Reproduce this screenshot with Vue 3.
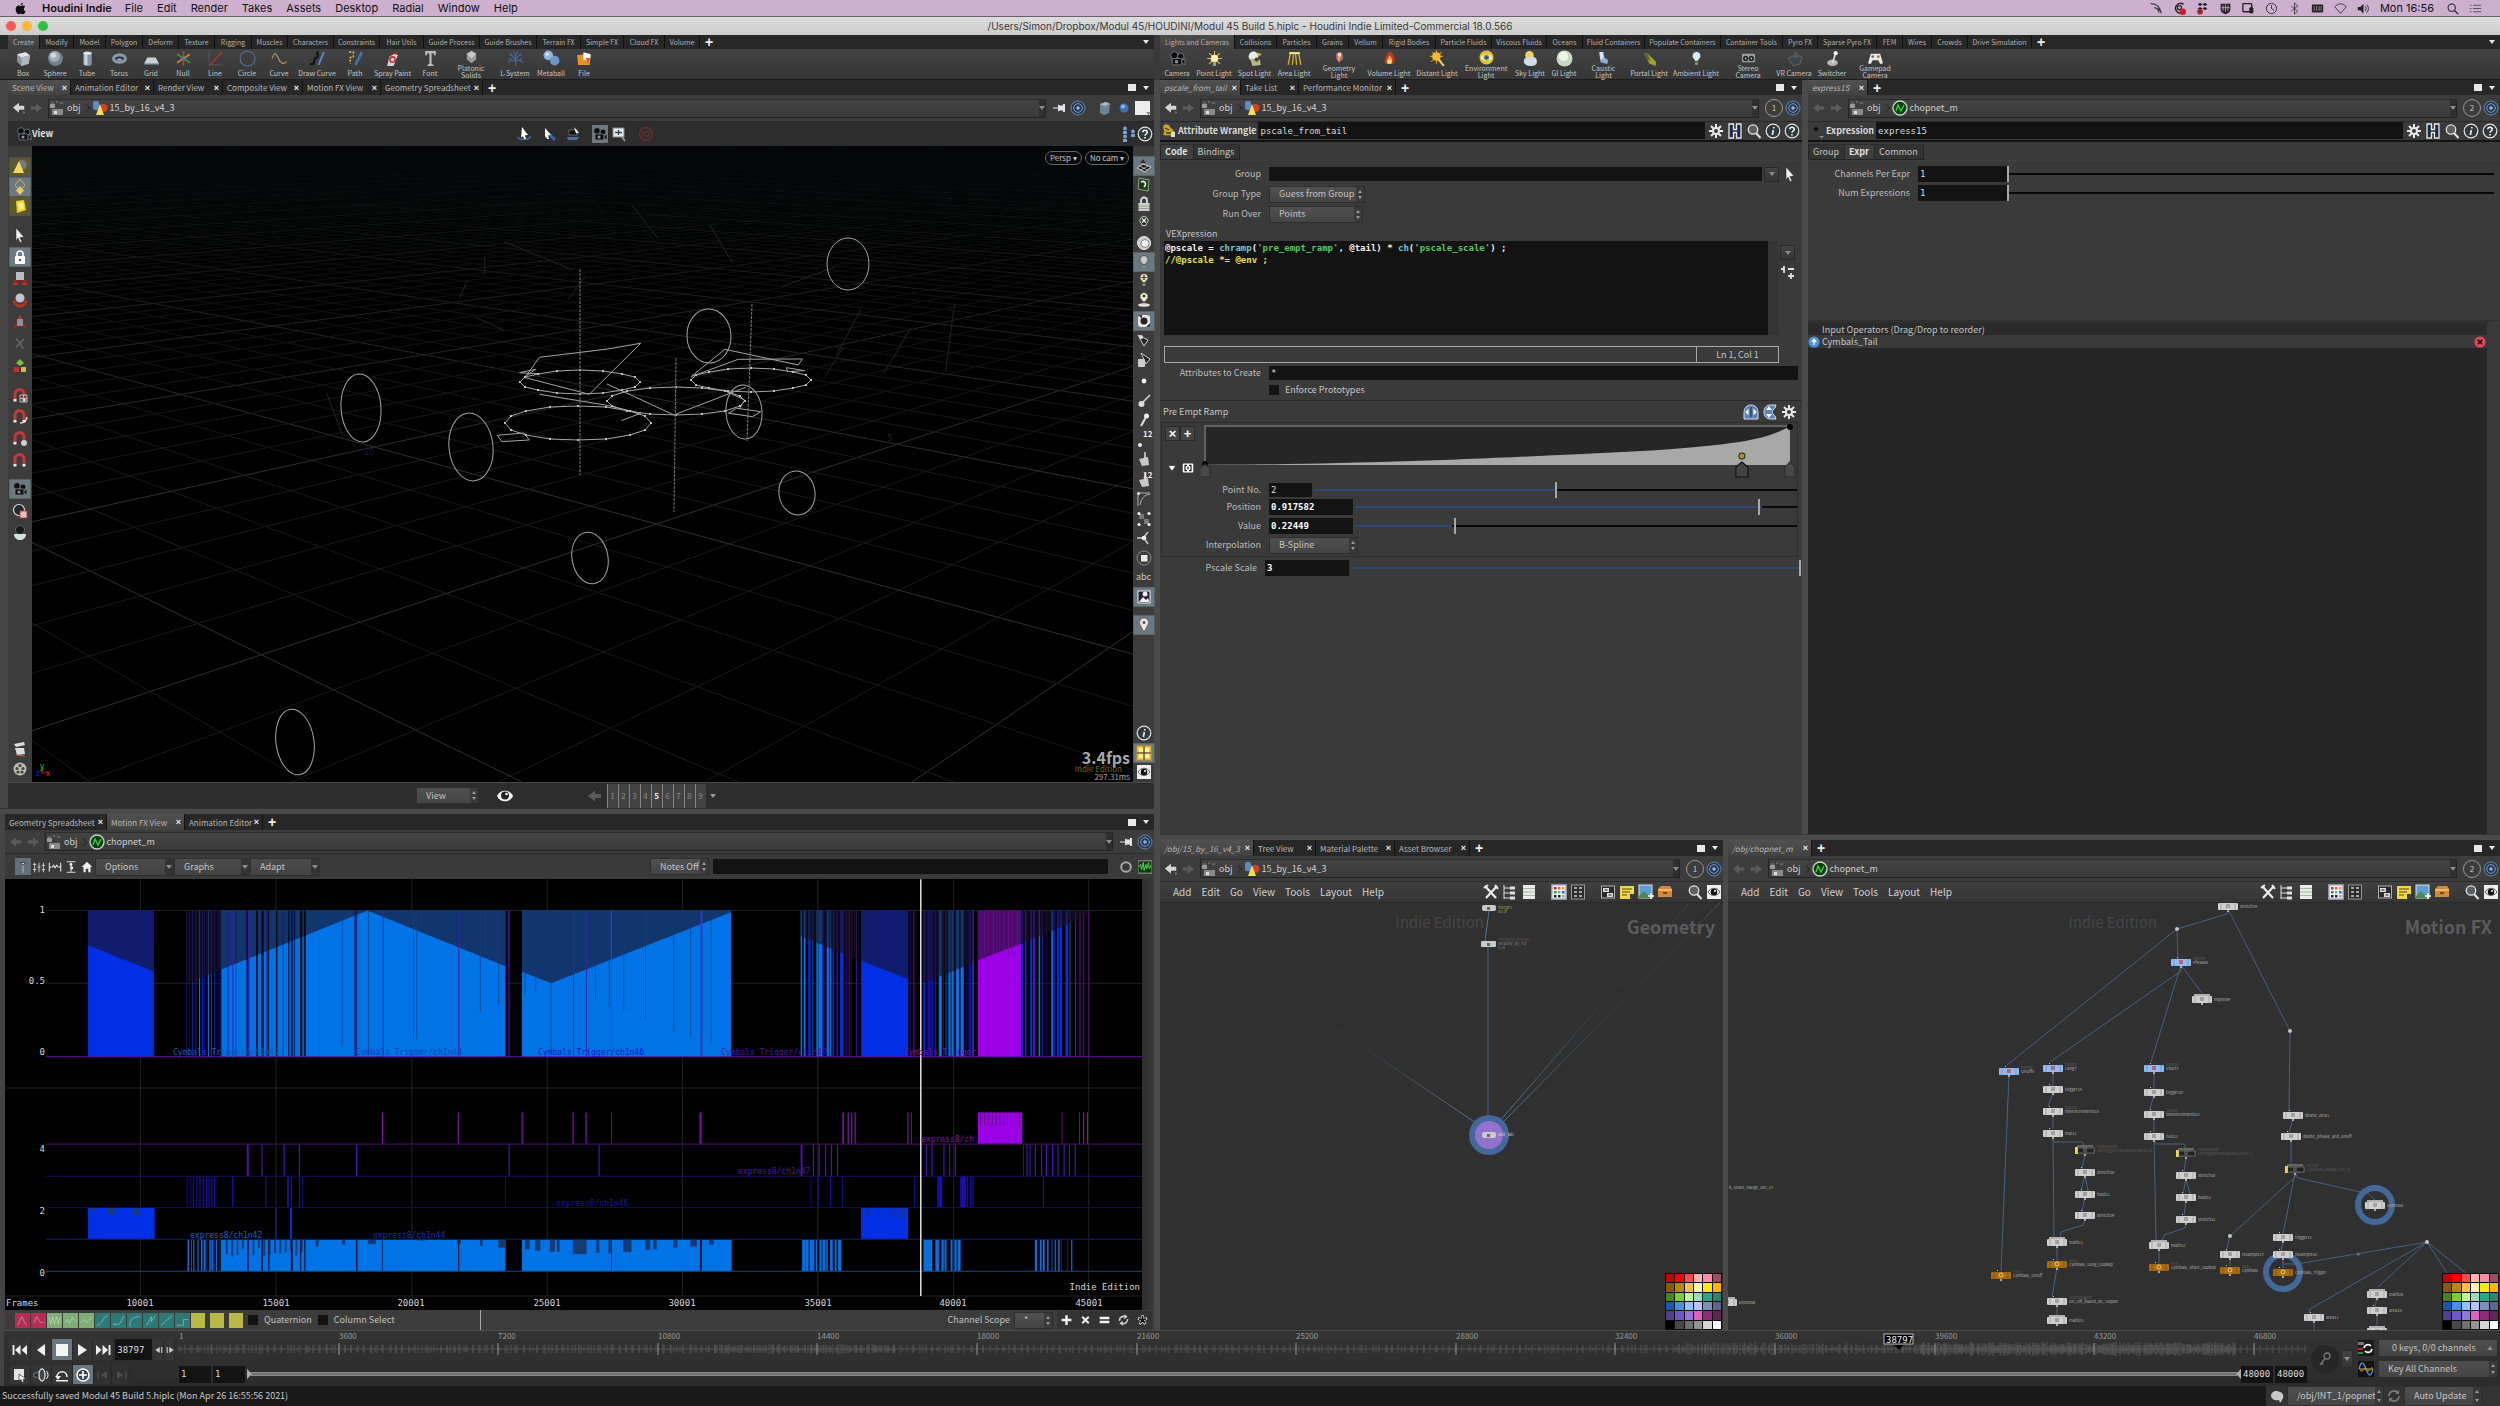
<script setup>
import { h } from 'vue'

const cam = '<g fill="#0d0f12" stroke="#7b8288" stroke-width=".8"><circle cx="5" cy="5" r="3.4"/><circle cx="11" cy="6" r="3"/><rect x="3" y="8" width="9" height="6" rx="1"/><path d="M12 10l3-2v6l-3-2z"/></g><circle cx="7" cy="11" r="1.6" fill="#8a9298"/>'
const magnet = '<path d="M3 12V7a4.500 4.500 0 0 1 9 0v5" fill="none" stroke="#c43a3a" stroke-width="3"/><path d="M1.500 12h3v2.500h-3zM10.500 12h3v2.500h-3z" fill="#e8e8e8"/>'
const bulb = (c) => `<path d="M8 1.500a4 4 0 0 0-2.400 7.200c.5.5.6 1 .6 1.800h3.600c0-.8.1-1.300.6-1.800A4 4 0 0 0 8 1.500z" fill="${c}" stroke="#222" stroke-width=".5"/><path d="M6.500 11.500h3v2.500h-3z" fill="#8a8f7a"/>`
const xyz = '<path d="M8 8L2 13M8 8l6 5" stroke="#a02020" stroke-width="3"/>'
const icons = {
  apple: '<path d="M11 1c0 1.600-1.300 3-2.800 3C8 2.500 9.500 1.200 11 1zM8.200 5c.8 0 1.700-.9 3-.8 1 .1 2 .5 2.600 1.500-2.400 1.500-2 4.700.5 5.700-.6 1.700-1.900 3.600-3.200 3.600-1 0-1.400-.6-2.700-.6s-1.700.6-2.700.6C3.900 15 2 11.700 2 9c0-3 1.900-4.700 3.800-4.700C7 4.300 7.600 5 8.200 5z" fill="#111"/>',
  box: '<path d="M2 4l8-2 4 3-1 8-7 2-4-4z" fill="#8a949e"/><path d="M2 4l8-2 4 3-8 2z" fill="#dfe5ea"/><path d="M6 7l8-2-1 8-7 2z" fill="#b0b9c2"/>',
  sphere: '<circle cx="8" cy="8" r="7" fill="#76808a"/><circle cx="7" cy="6" r="5" fill="#a3acb5"/><circle cx="6" cy="5" r="2.500" fill="#d2d8dd"/>',
  tube: '<rect x="4" y="2" width="8" height="13" rx="3" fill="#8793a0"/><rect x="5" y="3" width="3" height="11" fill="#c6d0d8"/><ellipse cx="8" cy="3" rx="4" ry="1.600" fill="#dbe2e8"/>',
  torus: '<ellipse cx="8" cy="8" rx="7" ry="5" fill="#8a98a8"/><ellipse cx="8" cy="8" rx="4" ry="2" fill="#2a3038"/><ellipse cx="8" cy="9" rx="2.500" ry="1" fill="#9fb0c4"/>',
  grid: '<path d="M4 7h8l3 6H1z" fill="#c9cfd4"/><path d="M1 13h14v1H1z" fill="#6d757c"/>',
  null: '<path d="M8 1v14" stroke="#c83c30" stroke-width="1.500"/><path d="M2 4l12 8" stroke="#3a9a3a" stroke-width="1.500"/><path d="M2 12l12-8" stroke="#d08a2a" stroke-width="1.500"/><circle cx="8" cy="8" r="1.600" fill="#4a80c0"/>',
  line: '<path d="M2 14V2M2 14h11" stroke="#555" /><path d="M3 14L14 2" stroke="#b83a3a" stroke-width="1.300"/>',
  circle: '<circle cx="8" cy="8" r="7" fill="none" stroke="#5672a0"/>',
  curve: '<path d="M1 8C3 2 5 3 7 8s5 6 8 3" fill="none" stroke="#c49a50"/><path d="M1 8l3-6 4 9 6 1" fill="none" stroke="#777" stroke-width=".6"/>',
  draw: '<path d="M1 13c6 2 2-5 6-6s-2-4 2-5" fill="none" stroke="#111" stroke-width="2"/><path d="M9 14l5-12" stroke="#4a86c8" stroke-width="2"/>',
  path: '<path d="M2 2h4v5H3v6" fill="none" stroke="#d8b830" stroke-dasharray="2 1.500" stroke-width="1.500"/><path d="M8 14l6-12" stroke="#3f74b4" stroke-width="2.500"/>',
  spray: '<path d="M5 6l6-3 2 2-4 10H3z" fill="#d8d4d0"/><circle cx="8" cy="9" r="2.500" fill="none" stroke="#c03030" stroke-width="1.500"/><path d="M9 1l4 1-2 3z" fill="#b0281e"/>',
  font: '<path d="M3 1h10v4h-1.500L11 3H9v10l2 1v1H5v-1l2-1V3H5l-.5 2H3z" fill="#b9bec2"/>',
  solids: '<path d="M8 1l5 3v6l-5 4-5-4V4z" fill="#9a9a9a"/><path d="M8 1l5 3-5 5-5-5z" fill="#c9c9c9"/>',
  tree: '<path d="M8 15V5M8 9L3 3M8 9l5-6M8 11l6-3M8 11L2 8M8 5L6 1M8 5l2-4M5 5L2 5M11 5l3 0M4 9l-3 3M12 9l3 3" stroke="#3e6ea6" fill="none"/>',
  meta: '<circle cx="5" cy="5" r="4.500" fill="#92b8de"/><circle cx="11" cy="10" r="4.500" fill="#6c98c8"/><circle cx="4" cy="4" r="1.500" fill="#dcecfb"/>',
  file: '<path d="M1 5l6-1 1 2h5v8H2z" fill="#e8902a"/><path d="M7 2l7 2-1 7-6-2z" fill="#fff"/><path d="M9 7l5 1-3 5z" fill="#e05a20"/>',
  camera: cam,
  point: '<path d="M8 1v14M1 8h14M3 3l10 10M13 3L3 13" stroke="#e8c040"/><circle cx="8" cy="8" r="3.500" fill="#fff3b0"/><rect x="6.500" y="11" width="3" height="4" fill="#999"/>',
  spot: '<circle cx="7" cy="6" r="4.500" fill="#e9e9e4"/><path d="M4 8l9 1 1 5-8 1z" fill="#b9b48c"/><circle cx="10" cy="9" r="2" fill="#444"/><path d="M10 2l5 2-3 2z" fill="#d8b820"/>',
  area: '<path d="M3 2h10v2H3z" fill="#ffe680"/><path d="M4 4L2 14M7 4l-1 10M9 4l1 10M12 4l2 10" stroke="#d8b430" stroke-width="1.200"/>',
  geo: '<ellipse cx="8" cy="7" rx="4" ry="5" fill="#9a6a90"/><path d="M8 3c3 4 0 6 0 11-3-4-2-7 0-11z" fill="#f0a030"/><circle cx="8" cy="5" r="2" fill="#ffe0a0"/>',
  volume: '<path d="M8 1c5 4 6 7 4 12H4C2 8 5 6 8 1z" fill="#c0391e"/><path d="M8 5c3 3 3 5 2 8H6c-2-3 1-5 2-8z" fill="#ff9a30"/><circle cx="8" cy="11" r="2" fill="#ffe48a"/>',
  distant: '<path d="M7 0v13M1 6h12M3 2l9 9M12 2L2 11" stroke="#d89a20"/><circle cx="7" cy="6" r="4" fill="#f3bc2e"/><path d="M9 9l5 6" stroke="#e8c860" stroke-width="2"/>',
  env: '<circle cx="8" cy="8" r="7.500" fill="#e4c428"/><ellipse cx="8" cy="8" rx="6" ry="3.500" fill="#f5edc0"/><circle cx="8" cy="8" r="3" fill="#6a8aa0"/><circle cx="8" cy="8" r="1.200" fill="#222"/>',
  sky: '<circle cx="7" cy="5" r="4" fill="#f4d060"/><path d="M2 9a4 3 0 0 1 6-2 4 4 0 0 1 6 4c0 3-2 4-6 4s-7-2-6-6z" fill="#cddbe8"/>',
  gi: '<circle cx="8" cy="8" r="7.500" fill="#c9d6c4"/><circle cx="7" cy="6" r="4.500" fill="#eef4ea"/>',
  caustic: '<path d="M3 2h5l1 6 4 3-1 4-7-2z" fill="#8fb0d4"/><path d="M4 2h3l1 6-3 3z" fill="#d9e6f4"/>',
  portal: '<path d="M3 3l3 0 8 8 0 4-6-2z" fill="#a3a028"/><path d="M3 3l3 0 3 7-3-1z" fill="#5c6a20"/>',
  ambient: bulb('#d9eef4'),
  stereo: '<rect x="1" y="4" width="14" height="9" rx="1" fill="#9a9d9e"/><circle cx="5" cy="9" r="2.800" fill="#222"/><circle cx="11" cy="9" r="2.800" fill="#222"/><circle cx="5" cy="9" r="1" fill="#9bc"/><circle cx="11" cy="9" r="1" fill="#9bc"/>',
  vr: '<path d="M2 8l8-4 5 3-2 6-6 2z" fill="#3b4248" stroke="#70787e" stroke-width=".7"/><path d="M8 1l2 0 2 6-5 1z" fill="#50585e"/>',
  switcher: '<ellipse cx="8" cy="12" rx="5" ry="3" fill="#b8b8b8"/><path d="M8 12l3-9" stroke="#ddd" stroke-width="1.500"/><circle cx="11" cy="3" r="2" fill="#eee"/>',
  pad: '<path d="M3 4h10l3 10-3 1-2-4H5l-2 4-3-1z" fill="#ece9e2"/><circle cx="5" cy="7" r="1.300" fill="#555"/><circle cx="11" cy="7" r="1.300" fill="#c44"/>',
  back: '<path d="M1 7.500L8 2v3.500h6V10H8v3.500z" fill="#d4d4d4"/><path d="M13 11v4l2-2z" fill="#888"/>',
  backDim: '<path d="M1 8l7-5.500V6h6v4H8v3.500z" fill="#5a5a5a"/>',
  fwd: '<path d="M15 8L8 2.500V6H2v4h6v3.500z" fill="#5a5a5a"/>',
  obj: '<path d="M2 3h3M7 2h2M11 3h3M4 6h2" stroke="#888"/><rect x="1" y="4" width="5" height="4" fill="#9a9a9a"/><rect x="3" y="9" width="11" height="6" fill="#8a8a8a"/><rect x="5" y="11" width="3" height="3" fill="#ddd"/>',
  geoObj: '<rect x="1" y="1" width="6" height="9" rx="2" fill="#5c8cc8"/><circle cx="11.500" cy="8" r="4" fill="#d0421e"/><path d="M8 4l4 11H4z" fill="#f7dc5a"/>',
  chop: '<circle cx="8" cy="8" r="7" fill="#123d12" stroke="#bfd8bf" stroke-width="1.400"/><path d="M4 11l2-6 3 6 3-6" fill="none" stroke="#38d838" stroke-width="1.300"/>',
  pin: '<path d="M1 7.500h5v-3l2 1h3V4h2v8h-2v-1.500H8l-2 1v-3H1z" fill="#e2e2e2"/>',
  target: '<circle cx="8" cy="8" r="7" fill="#26384f" stroke="#6787b2"/><circle cx="8" cy="8" r="4.300" fill="none" stroke="#7f9fcb"/><circle cx="8" cy="8" r="1.800" fill="#8fb4e8"/>',
  gear: '<path d="M8 1v14M1 8h14M3 3l10 10M13 3L3 13" stroke="#e8e8e8" stroke-width="2"/><circle cx="8" cy="8" r="4" fill="#e8e8e8"/><circle cx="8" cy="8" r="2" fill="#3a3a3a"/>',
  hou: '<path d="M2 1h4.500v5.500h3V1H14v14H9.500V9.500h-3V15H2z" fill="#1c2c48" stroke="#e8e8e8" stroke-width="1.300"/>',
  mag: '<circle cx="7" cy="6.500" r="4.700" fill="#5a5f63" stroke="#e4e4e4" stroke-width="1.300"/><path d="M10 10l4.500 5" stroke="#e4e4e4" stroke-width="2"/>',
  info: '<circle cx="8" cy="8" r="6.800" fill="#30383c" stroke="#e4e4e4" stroke-width="1.200"/><path d="M8.800 4v1.500M8.300 7l-.9 5" stroke="#e8e8e8" stroke-width="1.700"/>',
  help: '<circle cx="8" cy="8" r="6.800" fill="#30383c" stroke="#e4e4e4" stroke-width="1.200"/><path d="M5.800 6.200C6 3.500 10.500 3.700 10.300 6.300 10.200 8 8 8 8 9.700M8 11v1.500" fill="none" stroke="#fff" stroke-width="1.500"/>',
  wrangle: '<path d="M2 4c1-4 6-3 7 0l5 5-3 4c-3-2-7 1-9-2 2-2 1-4 0-7z" fill="#c8a820"/><path d="M4 5l4 2M5 10l5 0" stroke="#4a3a00" stroke-width="1.300"/><rect x="10" y="9" width="4" height="5" fill="#ddd"/>',
  expr: '<path d="M5 6h4M7 4v4" stroke="#000" stroke-width="1.600"/><path d="M10 13h5l-2.500 2.500z" fill="#888"/>',
  cone: '<circle cx="10" cy="6" r="5" fill="#777"/><path d="M7 2l5 12H1z" fill="#f3d860"/>',
  diamonds: '<path d="M8 0l5 6-5 6-5-6z" fill="none" stroke="#d0b050"/><path d="M8 7l4 4.500L8 16l-4-4.500z" fill="#e8c860"/>',
  cubeY: '<path d="M4 3l8-1 2 10-9 3z" fill="#f0d020"/><path d="M6 5l5-.5 1 6-5 1.500z" fill="#fbf08a"/>',
  cursor: '<path d="M4 1l8 9-4 .5L10 15l-2 .5L6 11l-2 3z" fill="#f2f2f2" stroke="#222" stroke-width=".5"/>',
  lock: '<rect x="3" y="7" width="10" height="8" rx="1" fill="#fff"/><path d="M5 7V5a3 3 0 0 1 6 0v2" fill="none" stroke="#fff" stroke-width="1.600"/><circle cx="8" cy="11" r="1.300" fill="#666"/>',
  move: xyz + '<rect x="4" y="2" width="8" height="8" fill="#b5bcc2"/><path d="M1 14h5M10 14h5" stroke="#c83030" stroke-width="2"/>',
  rot: '<path d="M2 8a6 6 0 1 0 12 0" fill="none" stroke="#b83220" stroke-width="3"/><circle cx="8" cy="6" r="4.500" fill="#bcc5cc"/>',
  scale: xyz + '<rect x="5" y="5" width="6" height="7" fill="#8a9096"/><path d="M8 0l2 5H6z" fill="#c82c2c"/>',
  pose: '<path d="M4 2l4 5 4-4M8 7l-4 4M8 7l3 6" stroke="#606060" stroke-width="1.800" fill="none"/>',
  handle: '<path d="M8 1l4 4-4 3-4-3z" fill="#80c030"/><path d="M2 9l5 0 0 5-5 0z" fill="#c83030"/><path d="M9 9l5 0 0 5-5 0z" fill="#c8c040"/>',
  snapGrid: magnet + '<path d="M8 8h7v7H8zM8 11.500h7M11.500 8v7" fill="none" stroke="#bbb"/>',
  snapCurve: magnet + '<path d="M8 15c5 0 6-2 7-6" stroke="#ddd" fill="none" stroke-width="1.500"/>',
  snapPt: magnet + '<circle cx="12" cy="13" r="3" fill="#ccc"/>',
  magnet,
  render: '<circle cx="7" cy="7" r="5.500" fill="#23282c" stroke="#ddd" stroke-width="1.200"/><path d="M8 8h7v7H8z" fill="#d8c8c0" stroke="#c83030"/>',
  orb: '<circle cx="8" cy="5" r="4.500" fill="#16181a" stroke="#777" stroke-width=".7"/><path d="M2 9h12c0 8-12 8-12 0z" fill="#d3e0e0"/>',
  clap: '<path d="M2 3l10-2 1 3-9 2zM3 7h9l1 6-8 1z" fill="#ddd"/><path d="M4 14l9 1" stroke="#c86040"/>',
  reel: '<circle cx="8" cy="8" r="6.500" fill="#b8beb0"/><g fill="#444"><circle cx="8" cy="4.500" r="1.600"/><circle cx="11" cy="7.500" r="1.600"/><circle cx="10" cy="11" r="1.600"/><circle cx="6" cy="11" r="1.600"/><circle cx="5" cy="7.500" r="1.600"/></g>',
  mesh: '<path d="M1 10l6-4 8 3-6 5z" fill="#222" stroke="#eee" stroke-width=".8"/><path d="M4 8l7 4M5 12l7-4" stroke="#eee" stroke-width=".6"/><path d="M7 1l3 4H4z" fill="#333"/>',
  clip: '<path d="M3 2l10 2-1 11-10-2z" fill="#223a22" stroke="#7ab070"/><path d="M5 6c4-2 6 2 3 5" stroke="#eee" fill="none" stroke-width="1.500"/>',
  lockG: '<rect x="2.500" y="7" width="11" height="8" fill="#cdd0c4"/><path d="M5 7V4.500a3 3 0 0 1 6 0V7" fill="none" stroke="#ddd" stroke-width="1.800"/><path d="M3 10h10M3 12.500h10" stroke="#999"/>',
  bulbX: '<path d="M8 1.500a4 4 0 0 0-2.400 7.200l.6 1.800h3.600l.6-1.800A4 4 0 0 0 8 1.500z" fill="#222" stroke="#cfd8cf"/><path d="M6 3.500l4 4M10 3.500l-4 4" stroke="#e8e8e8" stroke-width="1.500"/>',
  disc: '<circle cx="8" cy="8" r="6.500" fill="#ccc" stroke="#eee"/><circle cx="9" cy="8.500" r="4" fill="#efefef" stroke="#888"/>',
  bulb: bulb('#c3ccc6'),
  bulbP: bulb('#e8e0b0') + '<path d="M5.500 5.500h5M8 3v5" stroke="#333" stroke-width="1.200"/>',
  bulbS: bulb('#f5f0d0') + '<ellipse cx="8" cy="14" rx="6" ry="1.800" fill="#ddd"/><circle cx="8" cy="5" r="1.500" fill="#333"/>',
  panda: '<rect x="2" y="2" width="12" height="12" rx="3" fill="#e4e4e4"/><circle cx="8" cy="8" r="3.500" fill="#222"/><path d="M2 2h4v4zM14 14h-4l4-4z" fill="#444"/>',
  ptr: '<path d="M2 3l10 5-4 6z" fill="#222" stroke="#ccc"/><circle cx="5" cy="5" r="2" fill="#ddd"/>',
  ptr2: '<path d="M5 1l9 6-4 5z" fill="#222" stroke="#ccc"/><rect x="2" y="7" width="7" height="8" rx="1" fill="#ccc"/>',
  dot: '<circle cx="8" cy="8" r="2.400" fill="#eee"/>',
  brush: '<path d="M14 2L7 9" stroke="#ddd" stroke-width="1.500"/><circle cx="5.500" cy="11" r="3" fill="#ddd"/>',
  needle: '<circle cx="10.500" cy="4" r="2.500" fill="#eee"/><path d="M10 5L5 14" stroke="#ddd" stroke-width="2"/>',
  ptNum: '<circle cx="4" cy="14" r="2" fill="#eee"/>',
  bucket: '<path d="M3 8l9-2 1 8-7 1z" fill="#c8c8c8"/><path d="M9 1l0 7" stroke="#ddd" stroke-width="1.500"/>',
  hull: '<path d="M2 15V2h12M4 14C5 8 8 4 14 3" fill="none" stroke="#b0b0b0"/><circle cx="2.500" cy="2.500" r="1.500" fill="#eee"/>',
  corners: '<path d="M3 3h5v5H3zM8 8h5v5H8z" fill="#777"/><g fill="#eee"><circle cx="3" cy="2.500" r="1.600"/><circle cx="13" cy="2.500" r="1.600"/><circle cx="3" cy="13.500" r="1.600"/><circle cx="13" cy="13.500" r="1.600"/></g>',
  fan: '<path d="M1 8h6l5-6M8 8l4 6" stroke="#ccc" stroke-width="1.500" fill="none"/><circle cx="8" cy="8" r="2.300" fill="#eee"/>',
  dbl: '<circle cx="8" cy="8" r="7" fill="none" stroke="#888"/><rect x="5" y="5" width="6.500" height="6.500" fill="#e8e8e8"/>',
  img: '<rect x="2" y="2" width="12" height="12" fill="#223" stroke="#eee"/><path d="M3 13l4-5 3 3 2-2 1.500 4z" fill="#eee"/><circle cx="9" cy="5" r="2.500" fill="#eee"/>',
  loc: '<path d="M8 1a4.500 4.500 0 0 1 4.300 6L8 15 3.700 7A4.500 4.500 0 0 1 8 1z" fill="#e8e8e8" stroke="#444" stroke-width=".6"/><circle cx="8" cy="5.500" r="1.500" fill="#555"/>',
  panes: '<rect x="1" y="1" width="14" height="14" fill="#f3c940" stroke="#d09a10"/><path d="M8 1v14M1 8h14" stroke="#333"/><path d="M3 3h4v4H3zM9 3h4v4H9zM3 9h4v4H3zM9 9h4v4H9z" fill="#fff0a0"/>',
  eye: '<rect x="1" y="1" width="14" height="14" fill="#eee"/><path d="M2 8c3-5 9-5 12 0-3 4.500-9 4.500-12 0z" fill="#fff" stroke="#333" stroke-width=".8"/><circle cx="8" cy="8" r="3.300" fill="#111"/><circle cx="9" cy="7" r="1" fill="#fff"/>',
  eyeBare: '<path d="M0 8c3-7 13-7 16 0-3 7-13 7-16 0z" fill="#f2f2f2"/><circle cx="8" cy="7.500" r="4" fill="#222"/><circle cx="9.500" cy="6" r="1.300" fill="#fff"/>',
  selA: '<path d="M2 11a6 3 0 1 0 12-1" fill="none" stroke="#4a6aa0" stroke-width="1.500"/><path d="M6 1l6 8-3 .3L10 13l-2 0-1-3-2 2z" fill="#fff"/>',
  selB: '<path d="M8 8l6 6" stroke="#3a66a8" stroke-width="3"/><path d="M4 2l6 7-3 .3L8 13l-2 0-1-3-1 2z" fill="#fff"/>',
  selC: '<path d="M1 11h12l-2 3H2z" fill="#4a6ea8"/><rect x="3" y="4" width="8" height="5" fill="#111" stroke="#888" stroke-width=".6"/><path d="M8 1l5 6-3 .3z" fill="#fff"/>',
  frame: '<rect x="2" y="2" width="11" height="9" fill="#e8e8e8" stroke="#888"/><path d="M7.500 4v5M4 6.500h7" stroke="#345" stroke-width="1.300"/><path d="M11 11l3 4" stroke="#999" stroke-width="1.500"/>',
  stop: '<circle cx="8" cy="8" r="6.500" fill="none" stroke="#6b2c2c" stroke-width="1.500"/><rect x="5" y="6" width="6" height="4" fill="none" stroke="#6b3434"/>',
  cube: '<path d="M3 4l6-2 4 2-1 9-5 2-4-2z" fill="#6d8494"/><path d="M3 4l6-2 4 2-6 2z" fill="#a8bac6"/>',
  ball: '<circle cx="8" cy="8" r="4.500" fill="#3b70b8"/><circle cx="7" cy="6.500" r="2" fill="#8ab8ee"/>',
  white: '<rect x="0" y="1" width="15" height="14" fill="#ececec"/><path d="M11 12h5l-2.500 3z" fill="#888"/>',
  people: '<g fill="#7aa0d8"><circle cx="4" cy="2.500" r="2"/><rect x="2" y="5" width="4" height="3"/><circle cx="12" cy="5.500" r="2"/><rect x="10" y="8" width="4" height="3"/><circle cx="4" cy="10.500" r="2"/><rect x="2" y="13" width="4" height="3"/></g>',
  cA: '<path d="M8 15V5M5 3h6L8 6z" stroke="#333" fill="#eee"/><path d="M8 6v9" stroke="#e4e4e4"/>',
  cB: '<path d="M3 3v11M8 3v11M13 3v11M1 5h4M6 8h4M11 6h4M1 11h4M11 11h4" stroke="#d8d8d8" fill="none"/>',
  cC: '<path d="M1.500 3v10M14.500 3v10M2 8h3l1.500-2L8 9l2-3 1.500 2H14" stroke="#e0e0e0" fill="none" stroke-width="1.300"/>',
  cD: '<path d="M3 2h10M3 14h10M8 3v10" stroke="#e0e0e0" stroke-width="1.300"/><circle cx="8" cy="5" r="1.600" fill="#eee"/><circle cx="9" cy="9" r="1.600" fill="#eee"/>',
  home: '<path d="M8 2l6 6h-2v6H9.500v-4h-3v4H4V8H2z" fill="#eee"/>',
  ring: '<circle cx="8" cy="8" r="5.500" fill="none" stroke="#a8a8a8" stroke-width="2.200"/>',
  wave: '<rect x="0" y="1" width="16" height="14" fill="#0e3a0e" stroke="#aaa"/><path d="M1 8l2-3 1 6 2-8 1 9 2-7 1 5 2-7 1 7 2-4" fill="none" stroke="#5ee05e"/>',
  tools: '<path d="M2 2l11 12M14 2L3 14" stroke="#ececec" stroke-width="2.200"/><path d="M1 4l4-3M12 1l3 4" stroke="#ececec" stroke-width="2"/>',
  treeI: '<path d="M2 1v14M2 4h6M2 9h6M2 14h6" stroke="#e0e0e0" fill="none"/><path d="M8 2.500h5v3H8zM8 7.500h5v3H8zM8 12.500h5v3H8z" fill="#e0e0e0"/>',
  sheet: '<rect x="2" y="1" width="12" height="14" fill="#e8ece6"/><path d="M2 4.500h12M2 8h12M2 11.500h12" stroke="#aab4aa"/>',
  palette: '<rect x="0" y="0" width="16" height="16" fill="#8d96a8"/><rect x="1.500" y="1.500" width="13" height="13" fill="#f4f4f4"/><path d="M3 3h2.500v2.500H3z" fill="#d02020"/><path d="M7 3h2.500v2.500H7z" fill="#e06060"/><path d="M11 3h2.500v2.500H11z" fill="#e8a030"/><path d="M3 7h2.500v2.500H3z" fill="#30a030"/><path d="M7 7h2.500v2.500H7z" fill="#60c0a0"/><path d="M11 7h2.500v2.500H11z" fill="#3060c0"/><path d="M3 11h2.500v2.500H3zM7 11h2.500v2.500H7z" fill="#222"/><path d="M11 11h2.500v2.500H11z" fill="#a0a0a0"/>',
  slots: '<rect x="1.500" y="1" width="13" height="14" fill="#2b2b2b" stroke="#9a9a9a"/><path d="M4 4h3M9 4h3M4 8h3M9 8h3M4 12h3M9 12h3" stroke="#d0d0d0" stroke-width="1.500"/>',
  flow: '<rect x="1.500" y="2" width="13" height="12" fill="#2b2b2b" stroke="#b0b0b0"/><path d="M3 4h6v4H3zM7 9h6v4H7z" fill="#dcdcdc"/><path d="M4.500 6h3M8.500 11h3" stroke="#222"/>',
  note: '<path d="M1 2h14v8l-4 5H1z" fill="#f0d848"/><path d="M3 5h10M3 8h8M3 11h5" stroke="#5a4a10"/><path d="M11 15v-5h4z" fill="#333"/>',
  pic: '<rect x="1" y="1" width="13" height="13" fill="#5b9fd8" stroke="#ddd"/><path d="M1 12l5-5 4 4 4-3v6H1z" fill="#4a8a50"/><path d="M10 12h6M13 9v6" stroke="#fff" stroke-width="1.500"/>',
  crate: '<path d="M1 5l3-3h9l2 3v8H1z" fill="#d38a34"/><path d="M1 5h14v2H1z" fill="#f0b468"/><path d="M6 8h4v2H6z" fill="#7a4410"/>',
  plusW: '<path d="M8 2v12M2 8h12" stroke="#f0f0f0" stroke-width="3"/>',
  xW: '<path d="M4 4l8 8M12 4l-8 8" stroke="#f0f0f0" stroke-width="2.500"/>',
  eqW: '<path d="M2 5.500h12M2 10.500h12" stroke="#f0f0f0" stroke-width="3"/>',
  refresh: '<path d="M3 9a5 5 0 0 1 7-5M13 7a5 5 0 0 1-7 5" fill="none" stroke="#cfcfcf" stroke-width="2"/><path d="M9 1l4 3-4 3zM7 9l-4 3 4 3z" fill="#cfcfcf"/>',
  refreshDim: '<path d="M3 8a5 5 0 0 1 9-3M13 8a5 5 0 0 1-9 3" fill="none" stroke="#7c7c7c" stroke-width="1.600"/><path d="M13 2v4H9zM3 14v-4h4z" fill="#7c7c7c"/>',
  star: '<path d="M8 2v6M8 8L2.500 6M8 8l5.500-2M8 8l-3.500 5M8 8l3.500 5" stroke="#ddd" stroke-width="3.500"/><path d="M8 3v5M8 8L3.500 6.500M8 8l4.500-1.500M8 8l-3 4M8 8l3 4" stroke="#111" stroke-width="2"/>',
  first: '<path d="M1.500 3v10" stroke="#f0f0f0" stroke-width="1.800"/><path d="M8.500 3v10L3 8zM15 3v10L9.500 8z" fill="#f0f0f0"/>',
  prev: '<path d="M12 2v12L4 8z" fill="#f0f0f0"/>',
  stopSq: '<rect x="2" y="2" width="12" height="12" fill="#f2f6f2"/>',
  play: '<path d="M4 2v12l9-6z" fill="#f0f0f0"/>',
  last: '<path d="M14.500 3v10" stroke="#f0f0f0" stroke-width="1.800"/><path d="M7.500 3v10L13 8zM1 3v10L6.500 8z" fill="#f0f0f0"/>',
  stepB: '<path d="M9 4v8L3 8zM11 4h1.500v8H11z" fill="#ccc"/>',
  stepF: '<path d="M7 4v8l6-4zM3.500 4H5v8H3.500z" fill="#ccc"/>',
  winPtr: '<rect x="2" y="2" width="10" height="11" fill="#e4e4e4"/><path d="M7 7l7 5-3 .5 1 3-2 0-1-3-2 1.500z" fill="#fff" stroke="#222" stroke-width=".7"/>',
  speaker: '<path d="M1 6h3l4-4v12l-4-4H1z" fill="#2a2a2a" stroke="#777"/><ellipse cx="9" cy="8" rx="3" ry="6" fill="#3a4650" stroke="#dcdcdc" stroke-width="1.300"/><path d="M13.500 4a6 6 0 0 1 0 8" stroke="#eee" fill="none"/>',
  loop: '<path d="M3 10c0-7 10-7 10 0" fill="none" stroke="#eee" stroke-width="1.600"/><path d="M1 9h6l-3 4zM2 13h12v1.500H2z" fill="#eee"/>',
  clock: '<circle cx="8" cy="8" r="6" fill="#3c4650" stroke="#fff" stroke-width="1.500"/><path d="M8 4v8M4 8h8" stroke="#fff" stroke-width="1.600"/>',
  kPrev: '<path d="M3 4v8" stroke="#4a4e44" stroke-width="1.500"/><path d="M12 4v8L6 8z" fill="#4a4e44"/>',
  kNext: '<path d="M13 4v8" stroke="#4a4e44" stroke-width="1.500"/><path d="M4 4v8l6-4z" fill="#4a4e44"/>',
  key: '<circle cx="10" cy="5" r="3" fill="none" stroke="#777" stroke-width="1.300"/><path d="M8 7.500L3 14M4.500 12l2 1.500" stroke="#777" stroke-width="1.300"/>',
  chanA: '<rect x="0" y="0" width="16" height="16" fill="#1a1a1a"/><path d="M0 2h6v3H0z" fill="#777"/><path d="M0 8h5v2H0z" fill="#a03030"/><path d="M0 12h5v2H0z" fill="#3a8a3a"/><path d="M6 8a4 4 0 0 1 7-2M14 9a4 4 0 0 1-7 2" stroke="#fff" stroke-width="1.700" fill="none"/>',
  chanB: '<rect x="0" y="0" width="16" height="16" fill="#111"/><path d="M1 8c2-8 4-8 7 0s5 8 7 0" fill="none" stroke="#5a90e0" stroke-width="1.300"/><path d="M1 8h14" stroke="#d8b030"/><path d="M2 9c3 4 4-4 6-1s4 2 6-2" stroke="#d89030" fill="none"/>',
  brain: '<path d="M2 8c0-5 6-6 9-4 4 1 4 6 2 8l-2 3-1-3c-4 1-7 0-8-4z" fill="#c8c8c8"/>',
  symA: '<path d="M1 15V9C1 4 4 1 8 1s7 3 7 8v6z" fill="#5a82b4" stroke="#cfe0f0"/><path d="M5.500 4.500L2.500 8l3 3.500zM10.500 4.500l3 3.500-3 3.500z" fill="#fff"/><path d="M8 3v10" stroke="#223" />',
  symB: '<path d="M14 1c0 3-4 5-4 7s4 4 4 7H9C4 15 2 12 2 8s2-7 7-7z" fill="#5a82b4" stroke="#cfe0f0"/><path d="M7 2l3 4H4zM7 14l3-4H4z" fill="#fff"/>',
  addParm: '<path d="M1 5h4M4 2v7M8 5h6M8 12h6M11 9v6" stroke="#e0e0e0" stroke-width="1.800"/>',
  tri: '<path d="M3 5h10l-5 7z" fill="#fff" stroke="#000" stroke-width=".5"/>',
  book: '<rect x="1" y="2" width="14" height="12" rx="1" fill="#fff"/><path d="M6.500 4.500H4v7h2.500M9.500 4.500H12v7H9.500M8 6v4" stroke="#111" stroke-width="1.500" fill="none"/>',
  up: '<circle cx="8" cy="8" r="7.500" fill="#4a90e0"/><path d="M8 12V5M5 8l3-3.500L11 8" stroke="#fff" stroke-width="1.800" fill="none"/>',
  del: '<circle cx="8" cy="8" r="7.500" fill="#e04a58"/><path d="M5 5l6 6M11 5l-6 6" stroke="#200" stroke-width="2.200"/>',
  fin: '<path d="M1 2c8 0 11 4 13 12-2-6-6-7-9-7 3 0 5 1 6 6" fill="none" stroke="#333" stroke-width="1.300"/>',
  cc: '<path d="M13 3A6 6 0 1 0 12 13" fill="none" stroke="#222" stroke-width="1.800"/><circle cx="8" cy="7" r="2.500" fill="none" stroke="#222" stroke-width="1.500"/><circle cx="12" cy="12" r="4" fill="#c81e2c"/>',
  dropbox: '<path d="M5 1l3 2-3 2-3-2zM11 1l3 2-3 2-3-2zM5 6l3 2-3 2-3-2zM11 6l3 2-3 2-3-2z" fill="#222"/><circle cx="5" cy="12" r="3.500" fill="#a8202c"/>',
  shield: '<path d="M2 2h12v7c0 4-3 5-6 6-3-1-6-2-6-6z" fill="#222"/><path d="M5 4v7M8 3v9M11 4v7M3 7h10" stroke="#c9aecb"/>',
  screen: '<rect x="1" y="2" width="11" height="10" rx="1" fill="none" stroke="#222" stroke-width="1.600"/><rect x="9" y="6" width="5" height="8" rx="2" fill="#222"/>',
  tm: '<circle cx="8" cy="8" r="6.300" fill="none" stroke="#333" stroke-width="1.200"/><path d="M8 4v4l3 2" stroke="#333" fill="none" stroke-width="1.200"/>',
  bt: '<path d="M4 5l8 6-4 4V1l4 4-8 6" fill="none" stroke="#333"/>',
  batt: '<rect x="1" y="3" width="14" height="10" rx="1.500" fill="#222"/><path d="M4 5v6M7 5v6M10 5v6M12.500 5v6" stroke="#c9aecb" stroke-width=".8"/>',
  wifi: '<path d="M1 6c4-5 10-5 14 0L8 14z" fill="none" stroke="#333" stroke-width="1.100"/>',
  vol: '<path d="M1 6h3l4-4v12L4 10H1z" fill="#222"/><path d="M10 5a4 4 0 0 1 0 6M12 3a7 7 0 0 1 0 10" fill="none" stroke="#222"/>',
  search: '<circle cx="7" cy="7" r="4.500" fill="none" stroke="#222" stroke-width="1.300"/><path d="M10.500 10.500L15 15" stroke="#222" stroke-width="1.500"/>',
  list: '<path d="M1 4h2M5 4h10M1 8h2M5 8h10M1 12h2M5 12h10" stroke="#555" stroke-width="1.200"/>',
}
const Ico = (p) => h('svg', { class: 'ico', viewBox: '0 0 16 16', 'aria-hidden': 'true', innerHTML: icons[p.n] })
Ico.props = ['n']

const macMenus = ['File', 'Edit', 'Render', 'Takes', 'Assets', 'Desktop', 'Radial', 'Window', 'Help']
const macIcons = ['fin', 'cc', 'dropbox', 'shield', 'screen', 'tm', 'bt', 'batt', 'wifi', 'vol']

const shelves = [
  {
    tabs: [['Create', 32], ['Modify', 34], ['Model', 32], ['Polygon', 37], ['Deform', 36], ['Texture', 36], ['Rigging', 37], ['Muscles', 36], ['Characters', 46], ['Constraints', 46], ['Hair Utils', 44], ['Guide Process', 56], ['Guide Brushes', 57], ['Terrain FX', 44], ['Simple FX', 43], ['Cloud FX', 41], ['Volume', 35]],
    tools: [['box', 'Box', 32], ['sphere', 'Sphere', 32], ['tube', 'Tube', 32], ['torus', 'Torus', 32], ['grid', 'Grid', 32], ['null', 'Null', 32], ['line', 'Line', 32], ['circle', 'Circle', 32], ['curve', 'Curve', 32], ['draw', 'Draw Curve', 44], ['path', 'Path', 32], ['spray', 'Spray Paint', 43], ['font', 'Font', 32], ['solids', 'Platonic Solids', 50, 1], ['tree', 'L-System', 38], ['meta', 'Metaball', 34], ['file', 'File', 32]],
  },
  {
    tabs: [['Lights and Cameras', 75], ['Collisions', 42], ['Particles', 40], ['Grains', 32], ['Vellum', 34], ['Rigid Bodies', 53], ['Particle Fluids', 56], ['Viscous Fluids', 55], ['Oceans', 36], ['Fluid Containers', 62], ['Populate Containers', 76], ['Container Tools', 62], ['Pyro FX', 35], ['Sparse Pyro FX', 59], ['FEM', 26], ['Wires', 29], ['Crowds', 36], ['Drive Simulation', 64]],
    tools: [['camera', 'Camera', 34], ['point', 'Point Light', 40], ['spot', 'Spot Light', 41], ['area', 'Area Light', 38], ['geo', 'Geometry Light', 52, 1], ['volume', 'Volume Light', 48], ['distant', 'Distant Light', 48], ['env', 'Environment Light', 50, 1], ['sky', 'Sky Light', 38], ['gi', 'GI Light', 30], ['caustic', 'Caustic Light', 49, 1], ['portal', 'Portal Light', 42], ['ambient', 'Ambient Light', 52], ['stereo', 'Stereo Camera', 52, 1], ['vr', 'VR Camera', 40], ['switcher', 'Switcher', 36], ['pad', 'Gamepad Camera', 50, 1]],
  },
]

const TabBar = (p) => h('div', { class: 'tabs' }, [
  ...p.items.map(([label, w], i) => h('div', { class: ['tab', i === p.active && 'on', p.italic && i === 0 && 'it'], style: { width: w + 'px' } }, [
    h('button', { class: 'name' }, label), h('button', { class: 'x', 'aria-label': 'Close ' + label }, '×'),
  ])),
  h('button', { class: 'plus', 'aria-label': 'New tab' }, '+'),
  h('span', { class: 'sp' }), h('i', { class: 'max' }), h('i', { class: 'dn' }),
])
TabBar.props = ['items', 'active', 'italic']

const PathBar = (p) => h('div', { class: 'path' }, [
  h('button', { class: 'nav', 'aria-label': 'Back' }, h(Ico, { n: p.live ? 'back' : 'backDim' })),
  h('button', { class: 'nav', 'aria-label': 'Forward' }, h(Ico, { n: 'fwd' })),
  h('div', { class: 'crumbs' }, [
    h(Ico, { n: 'obj' }), h('a', { href: '#' }, 'obj'), h('i', { class: 'chev' }),
    h(Ico, { n: p.chop ? 'chop' : 'geoObj' }), h('a', { href: '#' }, p.chop ? 'chopnet_m' : '15_by_16_v4_3'),
    h('span', { class: 'sp' }), h('i', { class: 'drop' }),
  ]),
  p.num ? h('span', { class: 'num' }, p.num) : h(Ico, { n: 'pin' }),
  h(Ico, { n: 'target', class: 'tg' }),
  ...(p.extra || []).map((n) => h(Ico, { n, class: 'ex' })),
])
PathBar.props = ['live', 'chop', 'num', 'extra']

/* tool strips: icon, centre height, highlighted */
const leftTools = [['cone', 167, 2], ['diamonds', 187, 1], ['cubeY', 206, 2], ['cursor', 235], ['lock', 257, 1], ['move', 278], ['rot', 300], ['scale', 322], ['pose', 344], ['handle', 366], ['snapGrid', 395], ['snapCurve', 416], ['snapPt', 438], ['magnet', 460], ['camera', 489, 1], ['render', 511], ['orb', 533], ['clap', 749], ['reel', 769]]
const rightTools = [['mesh', 166, 1], ['clip', 184], ['lockG', 204], ['bulbX', 223], ['disc', 243], ['bulb', 262, 1], ['bulbP', 280], ['bulbS', 299], ['panda', 321, 1], ['ptr', 340], ['ptr2', 360], ['dot', 381], ['brush', 401], ['needle', 420], ['ptNum', 439], ['bucket', 459], ['bucket', 480], ['hull', 499], ['corners', 519], ['fan', 538], ['dbl', 558], ['abc', 577], ['img', 597, 1], ['loc', 625, 1], ['info', 733], ['panes', 753, 1], ['eye', 772]]
const stack = (list) => list.map((t, i) => ({ n: t[0], on: t[2], gap: t[1] - (i ? list[i - 1][1] : 146 + 9) - (i ? 18 : 0) }))
const leftStrip = stack(leftTools)
const rightStrip = stack(rightTools)

/* perspective floor grid: two vanishing points on one horizon */
const floor = []
for (let k = -7; k < 120; k++) {
  floor.push({ a: [-843, 115], b: [522 + 216 * k, 782], m: k % 5 === 0 })
  floor.push({ a: [1892, 115], b: [912 - 207 * k, 782], m: k % 5 === 0 })
}
const rings = [[361, 408, 20, 34, -4], [471, 447, 22, 34, -6], [709, 336, 22, 27, -3], [848, 264, 21, 26, 0], [744, 412, 18, 27, -4], [797, 493, 18, 22, -8], [590, 558, 18, 26, -10], [295, 742, 19, 33, -8]]
const polys = [[580, 382, 60, 12], [751, 380, 60, 12], [676, 401, 69, 14], [578, 423, 73, 17]].map(([cx, cy, rx, ry]) => {
  const pts = []
  for (let i = 0; i < 16; i++) pts.push([Math.round(cx + rx * Math.cos(i * Math.PI / 8)), Math.round(cy + ry * Math.sin(i * Math.PI / 8))])
  return pts
})
const wires = [
  '980,1133 1007,1072 1135,1047 1196,1030 1100,1183 978,1132 1000,1108 970,1118 1008,1122',
  '1290,1130 1353,1048 1490,1095 1498,1077 1378,1078 1290,1130', '1468,1103 1502,1112 1470,1115 1468,1103',
  '1007,1183 1130,1215 1196,1240 1160,1262', '1133,1152 1258,1245 1392,1162', '1350,1170 1390,1200 1380,1228',
  '1360,1240 1405,1250 1420,1235 1375,1225 1360,1240', '928,1306 978,1299 988,1320 937,1325 928,1306',
]
const ghosts = ['940,725 1070,810', '905,768 905,822', '873,838 858,895', '885,950 943,992', '1092,830 1060,900', '1180,615 1228,715', '1325,675 1368,790', '1460,860 1560,800', '1608,925 1560,1070', '1700,985 1650,1120', '1782,910 1765,1115', '1575,1040 1540,1130', '610,1180 640,1310']

/* deterministic pseudo-random */
let seed = 7
const rnd = () => (seed = (seed * 16807) % 2147483647) / 2147483647

/* channel graph, in scope units */
const B = '#0073e6', DB = '#002fe6', P = '#9c00e6', V = '#4b12c0', I = '#1a0cb4'
const fills = [[230, 402, DB], [577, 1321, B], [1364, 1910, B], [2250, 2373, DB], [2555, 2668, P]]
const overlay = ['230,145 230,245 402,320 402,145', '487,145 487,355 960,145', '960,145 1332,310 1332,145', '1363,145 1363,320 1440,354 1910,150 1910,145', '2092,145 2092,218 2238,285 2238,145', '2250,145 2250,289 2373,342 2373,145', '2413,145 2413,352 2543,296 2543,145', '2555,145 2555,288 2668,240 2668,145', '2668,145 2668,240 2843,160 2843,145']
const thin = []
const lower = []
const band = (x0, x1, step, cols, w, y0, y1, out) => { for (let x = x0; x < x1; x += step * (0.6 + rnd() * 0.8)) out.push([Math.round(x), Math.round(1 + rnd() * w), cols[Math.floor(rnd() * cols.length)], y0, y1]) }
const under = []
band(487, 577, 8, [B, I, DB], 2, 145, 565, under)
band(2092, 2202, 9, [B, B, DB, V], 9, 145, 565, under)
band(2413, 2543, 9, [B, I, DB, B], 8, 145, 565, under)
band(2670, 2810, 11, [V, B, B, DB], 6, 145, 565, under)
band(2202, 2240, 9, [P, V], 1, 145, 565, under)
band(2372, 2392, 8, [P, V], 1, 145, 565, under)
band(2810, 2845, 10, [P], 1, 145, 565, under)
band(577, 800, 22, ['#000', '#102a80', '#1a10a0', '#000'], 4, 145, 565, thin)
;[[607, 3, V], [647, 5, V], [683, 6, '#000'], [700, 3, '#000'], [721, 3, '#000'], [760, 6, '#001070'], [784, 6, '#000'], [794, 5, '#000'], [926, 7, '#0b1c60'], [1000, 3, '#4020a0'], [1197, 3, '#4020a0'], [1328, 4, V], [1497, 3, '#4020a0'], [1531, 3, '#4020a0'], [1596, 3, '#3050c0'], [1830, 6, '#3040b8']].forEach(([x, w, c]) => thin.push([x, w, c, 145, 565]))
;[[893, 530], [962, 560], [1079, 515], [1088, 515], [1254, 435], [1302, 415], [1371, 385], [1399, 375], [1439, 560], [1555, 400], [1591, 420], [1629, 435], [1686, 458], [1760, 492], [1804, 510], [1857, 530]].forEach(([x, y]) => thin.push([x, 2, '#163a80', 145, y]))
band(2252, 2372, 16, ['#10208a'], 1, 145, 300, thin)
band(2558, 2666, 9, ['#6a1a90'], 1, 145, 270, thin)
const row = (y0, y1, c, list) => list.forEach((v) => lower.push(Array.isArray(v) ? [v[0], v[1], c, y0, y1] : [v, 3, c, y0, y1]))
row(725, 816, '#8a12b0', [998, 1196, 1363, 1496, 1530, [1597, 2], [1828, 5], [2201, 4], 2215, 2224, 2233, 2371, [2381, 2], [2774, 2], [2820, 2], 2830, 2840])
row(725, 816, P, [[2555, 116]])
row(816, 908, V, [[645, 5], 683, 741, 781, 930, 1329, 1564, [2092, 5], 2124, 2139, 2156, 2171, 2187, 2419, 2434, 2465, 2480, 2495, [2673, 2], 2682, 2690, 2704, 2720, 2733, 2749, 2763, 2779, 2793, 2808])
row(908, 998, I, [[488, 2], [496, 2], 504, 513, 521, 530, 538, 545, 552, 559, 606, 693, [750, 5], 760, 781, [790, 2], [1320, 2], [2118, 2], [2137, 2], 2168, [2200, 2], [2389, 2], [2449, 13], [2509, 15], 2526, 2534, 2541, [2725, 3]])
row(998, 1089, DB, [[230, 174], [2250, 123], [720, 2], [758, 5]])
row(1090, 1181, B, [[577, 744], [1364, 548]])
const notches = [[238, 12, 998, 1010], [280, 20, 998, 1017], [348, 14, 998, 1021], [2268, 3, 998, 1020], [2286, 3, 998, 1024], [2306, 3, 998, 1024], [2331, 3, 998, 1024], [2345, 3, 998, 1030], [2355, 3, 998, 1030], [2363, 3, 998, 1030]]
;[[825, 8, 1110], [894, 8, 1105], [962, 20, 1103], [1090, 20, 1093], [1195, 9, 1103], [1254, 7, 1108], [1302, 18, 1113], [1372, 12, 1118], [1398, 14, 1122], [1437, 13, 1125], [1455, 7, 1125], [1497, 36, 1132], [1558, 8, 1128], [1590, 8, 1130], [1628, 22, 1126], [1686, 13, 1120], [1707, 9, 1118], [1760, 10, 1113], [1804, 17, 1110], [1853, 12, 1105]].forEach(([x, w, y]) => notches.push([x, w, 1090, y]))
for (let x = 590; x < 800; x += 14) notches.push([x, 5, 1090, 1110 + Math.round(rnd() * 30)])
band(490, 577, 8, [B], 3, 1090, 1181, lower)
band(2096, 2200, 9, [B], 8, 1090, 1181, lower)
band(2413, 2508, 9, [B], 9, 1090, 1181, lower)
band(2704, 2804, 12, [B], 5, 1090, 1181, lower)
const cuts = [[646, 4], [683, 4], [701, 3], [760, 5], [784, 3], [795, 3], [930, 4], [998, 2], [1197, 3], [1597, 2], [1829, 5]]
const purpleTeeth = []
for (let x = 2562; x < 2668; x += 10) purpleTeeth.push(x)
const scopeText = [
  [173, 1055, 'Cymbals_Trigger/ch1n42', '#155cae'], [356, 1055, 'Cymbals_Trigger/ch1n44', '#1440b8'], [538, 1055, 'Cymbals_Trigger/ch1n46', '#1414c8'],
  [721, 1055, 'Cymbals_Trigger/ch1n47', '#4a14b0'], [904, 1055, 'Cymbals_Trigger', '#7814a0'],
  [190, 1238, 'express8/ch1n42', '#1468c8'], [373, 1238, 'express8/ch1n44', '#1430c0'], [556, 1206, 'express8/ch1n46', '#1c14b0'], [738, 1174, 'express8/ch1n47', '#5014b8'], [921, 1142, 'express8/ch', '#7a14a8'],
]
const yLabels = [[913, '1'], [984, '0.5'], [1055, '0'], [1152, '4'], [1214, '2'], [1276, '0']]
const xLabels = [[140, '10001'], [276, '15001'], [411, '20001'], [547, '25001'], [682, '30001'], [818, '35001'], [953, '40001'], [1089, '45001']]

/* playbar */
const marks = [1, 3600, 7200, 10800, 14400, 18000, 21600, 25200, 28800, 32400, 36000, 39600, 43200, 46800].map((n, i) => ({ n, x: Math.round(4 + 159.6 * i) }))
const minor = []
for (let i = 0; i < 334; i++) minor.push(Math.round(4 + 6.384 * i))
const noise = []
const nz = (a, b, s, hgt) => { for (let x = a; x < b; x += s * (0.5 + rnd())) noise.push([Math.round(x), Math.round(2 + rnd() * hgt)]) }
nz(6, 540, 6, 3); nz(540, 720, 2, 3); nz(720, 1500, 10, 2); nz(1500, 1600, 2, 5); nz(1600, 1745, 3, 4); nz(1745, 2060, 1, 5)
const chanButtons = ['#b52d54', '#b52d54', '#7fae72', '#7fae72', '#7fae72', '#2c7a76', '#2c7a76', '#2c7a76', '#2c7a76', '#2c7a76', '#2c7a76', '#b9b946', '#b9b946', '#b9b946']
const glyphs = ['M3 13L7 4l5 9', 'M3 11l3-7 4 6h4', 'M2 4l2 8 2-8 2 8 2-8 2 8 2-8', 'M2 10l3-3 2 4 3-6 4 4', 'M2 10l3-3 3 3 3-3 3-2', 'M2 13c6 0 6-10 12-10', 'M2 12h5c5 0 4-8 7-8', 'M3 14C3 6 6 4 14 4', 'M4 13L9 4v5l4-6', 'M2 13L14 3', 'M2 13h7V7h5', '', '', '']

/* networks */
const colors = ['#c60000', '#f80000', '#ff4a4a', '#ffb4b4', '#ff8ca0', '#9c4e62', '#8c5800', '#b88800', '#ffc03c', '#ffffa8', '#ffec00', '#ffb400', '#48861c', '#78d02c', '#b8ff90', '#98dcc0', '#24a88c', '#2c8470', '#1a5aac', '#4890e0', '#94c4ff', '#b8c4ff', '#8090bc', '#5c6890', '#504090', '#7058c8', '#9078d8', '#e060c0', '#8c2c78', '#602850', '#000', '#484848', '#707070', '#949494', '#d4d4d4', '#fff']
const gx = (v) => Math.round(v / 2.01) - 8
const gy = (v) => Math.round(v / 2.722) - 73
const nodes = [
  [1022, 206, 'p', 'stretch19'], [927, 360, 'b', 'Phrase6', 'Delete'], [969, 461, 'm', 'express9'], [581, 655, 'b', 'OnOff5', 'Delete'], [669, 647, 'b', 'Long7', 'Delete'], [873, 647, 'b', 'Short7', 'Delete'],
  [669, 705, 'p', 'trigger19'], [873, 713, 'p', 'trigger20'], [669, 764, 'p', 'timeIncrements10', 'Count'], [873, 772, 'p', 'timeIncrements11', 'Count'], [669, 824, 'p', 'null11'], [873, 832, 'p', 'null12'],
  [733, 872, 'd', 'setTriggersToNoteNo(Zero)10', 'Expression'], [937, 880, 'd', 'setTriggersToNoteNo(Zero)11', 'Expression'], [733, 931, 'p', 'stretch28'], [937, 940, 'p', 'stretch30'], [733, 991, 'p', 'hold11'], [937, 999, 'p', 'hold12'], [733, 1049, 'p', 'stretch29'], [937, 1058, 'p', 'stretch31'],
  [678, 1121, 'm', 'math11'], [882, 1130, 'm', 'math12'], [678, 1182, 'o', 'Cymbals_Long_Lookup', 'Null'], [882, 1190, 'o', 'Cymbals_Short_Lookup', 'Null'], [565, 1211, 'o', 'Cymbals_OnOff', 'Null'], [678, 1281, 'p', 'On_Off_based_on_Slope4', 'Subnetwork'], [678, 1333, 'm', 'math23'],
  [1151, 776, 'p', 'delete_zero1'], [1147, 833, 'p', 'delete_phrase_and_onOff'], [1156, 923, 'd', 'Cymbals_Range_Del_X', 'Delete'], [1317, 1022, 'm', 'express8'], [1132, 1109, 'p', 'trigger11'], [1132, 1154, 'p', 'resample16'], [1132, 1202, 'o', 'Cymbals_Trigger'],
  [1025, 1155, 'p', 'resample17'], [1025, 1198, 'o', 'Cymbals', 'Null'], [1321, 1262, 'm', 'math26'], [1321, 1307, 'p', 'area10'], [1321, 1365, 'm', ''], [1193, 1325, 'p', 'area11'], [14, 1285, 'm', 'express6'],
].map(([x, y, k, label, sub]) => ({ x: gx(x), y: gy(y), k, label, sub }))
const nodeFill = { p: '#cfcfcf', m: '#cfcfcf', b: '#8fbcf4', d: '#444444', o: '#a86c14' }
const wires2 = ['1022,214 1020,230 918,269', '1022,214 1145,547', '918,269 920,350', '918,269 576,640', '927,368 927,385 664,632', '927,368 866,632', '927,368 969,445', '581,665 565,1200', '669,655 669,696', '669,715 660,752', '669,773 669,815', '669,833 672,1110', '669,833 672,848 728,848 733,860', '733,882 728,922', '733,940 726,982', '733,940 740,982', '733,1000 728,1040', '733,1058 730,1075 686,1095 684,1108', '678,1130 678,1172', '678,1192 667,1270', '678,1290 678,1320', '873,655 873,704', '873,722 864,760', '873,781 873,823', '873,841 877,1118', '873,841 876,856 932,856 937,868', '937,890 932,930', '937,949 930,990', '937,949 944,990', '937,1008 932,1048', '937,1067 934,1083 892,1102 888,1118', '882,1138 882,1180', '1145,547 1144,766', '1151,785 1144,824', '1147,842 1147,913', '1156,933 1156,945 1025,1106', '1156,933 1132,1100', '1156,933 1162,948 1304,992 1317,1008', '1025,1106 1018,1145', '1025,1164 1025,1188', '1132,1118 1128,1145', '1132,1163 1132,1192', '1132,1180 1160,1182 1422,1122', '1422,1122 1186,1305 1184,1316', '1422,1122 1322,1245', '1422,1122 1462,1205', '1422,1122 1500,1205', '1321,1271 1316,1298', '1321,1316 1321,1352', '1193,1334 1193,1362'].map((s) => s.split(' ').map((p) => { const [x, y] = p.split(','); return gx(+x) + ',' + gy(+y) }).join(' '))
const knots = [[918, 269], [1145, 547], [1025, 1106], [1422, 1122]].map(([x, y]) => [gx(x), gy(y)])
const netMenus = ['Add', 'Edit', 'Go', 'View', 'Tools', 'Layout', 'Help']
const netIcons = [['tools'], ['treeI'], ['sheet'], ['palette', 1], ['slots'], ['flow', 1], ['note'], ['pic'], ['crate'], ['mag', 1], ['eye']]
const headIcons = ['gear', 'hou', 'mag', 'info', 'help']
</script>

<template>
  <div class="app">
    <header class="mac">
      <Ico n="apple" /><b>Houdini Indie</b>
      <button v-for="m in macMenus" :key="m">{{ m }}</button>
      <span class="sp"></span>
      <Ico v-for="m in macIcons" :key="m" :n="m" class="mi" />
      <time>Mon 16:56</time><Ico n="search" class="mi" /><Ico n="list" class="mi" />
    </header>
    <div class="title">
      <span class="lights"><i class="r"></i><i class="y"></i><i class="g"></i></span>
      <h1>/Users/Simon/Dropbox/Modul 45/HOUDINI/Modul 45 Build 5.hiplc - Houdini Indie Limited-Commercial 18.0.566</h1>
    </div>

    <div class="cols">
      <section v-for="(s, si) in shelves" :key="si" class="shelf" :class="{ first: si === 0 }">
        <div class="shelftabs">
          <button v-for="(t, i) in s.tabs" :key="t[0]" :class="{ on: i === 0 }" :style="{ width: t[1] + 'px' }">{{ t[0] }}</button>
          <button class="plus" aria-label="Add shelf">+</button><span class="sp"></span><i class="dn"></i>
        </div>
        <div class="tools">
          <button v-for="t in s.tools" :key="t[1]" :class="{ two: t[3] }" :style="{ width: t[2] + 'px' }"><Ico :n="t[0]" /><span>{{ t[1] }}</span></button>
        </div>
      </section>
    </div>

    <main class="cols work">
      <div class="left">
        <section class="scene">
          <TabBar :items="[['Scene View', 63], ['Animation Editor', 83], ['Render View', 69], ['Composite View', 80], ['Motion FX View', 78], ['Geometry Spreadsheet', 102]]" :active="0" />
          <PathBar :live="true" :extra="['cube', 'ball', 'white']" />
          <div class="viewbar">
            <Ico n="camera" /><b>View</b>
            <span class="picks"><Ico n="selA" /><Ico n="selB" /><Ico n="selC" /><Ico n="camera" class="hl" /><Ico n="frame" /><Ico n="stop" /></span>
            <span class="sp"></span><Ico n="people" /><Ico n="help" />
          </div>
          <div class="stage">
            <div class="strip l"><button v-for="(t, i) in leftStrip" :key="i" :class="{ on: t.on === 1, yel: t.on === 2 }" :style="{ marginTop: t.gap + 'px' }" :aria-label="t.n"><Ico :n="t.n" /></button></div>
            <div class="port">
              <svg viewBox="32 146 1101 636" preserveAspectRatio="xMinYMin slice" aria-label="Viewport">
                <defs>
                  <linearGradient id="fade" x1="0" y1="0" x2="0" y2="1"><stop offset="0" stop-color="#06070a" /><stop offset=".12" stop-color="#020304" stop-opacity=".8" /><stop offset=".5" stop-color="#000" stop-opacity=".3" /><stop offset="1" stop-color="#000" stop-opacity="0" /></linearGradient>
                </defs>
                <line v-for="(l, i) in floor" :key="i" :x1="l.a[0]" :y1="l.a[1]" :x2="l.b[0]" :y2="l.b[1]" :stroke="l.m ? '#303030' : '#191919'" />
                <rect x="32" y="146" width="1101" height="330" fill="url(#fade)" />
                <g transform="scale(.5357 .3333)" fill="none">
                  <polyline v-for="g in ghosts" :key="g" :points="g" stroke="#242424" vector-effect="non-scaling-stroke" />
                  <polyline v-for="g in wires" :key="g" :points="g" stroke="#a4a4a4" vector-effect="non-scaling-stroke" />
                </g>
                <g fill="none" stroke="#a4a4a4">
                  <ellipse v-for="r in rings" :key="r[0]" :cx="r[0]" :cy="r[1]" :rx="r[2]" :ry="r[3]" :transform="`rotate(${r[4]} ${r[0]} ${r[1]})`" />
                  <polygon v-for="(p, i) in polys" :key="i" :points="p.join(' ')" />
                </g>
                <g fill="#c0c0c0"><template v-for="(p, i) in polys" :key="i"><rect v-for="(q, j) in p" :key="j" :x="q[0] - 1" :y="q[1] - 1" width="2" height="2" /></template></g>
                <path d="M580 269v206M676 358l-2 154M752 304l-5 137" stroke="#7a7a7a" stroke-dasharray="3 1" fill="none" />
                <g font-size="9"><text x="364" y="455" fill="#1c1c38">10</text><text x="887" y="441" fill="#3a2020">5</text></g>
                <path d="M42 773v-6" stroke="#0a0" /><path d="M42 773h5" stroke="#c00" />
                <g font-size="8"><text x="40" y="769" fill="#2c2">y</text><text x="46" y="776" fill="#e22">x</text><text x="36" y="776" fill="#22e">z</text></g>
              </svg>
              <div class="pills"><button>Persp ▾</button><button>No cam ▾</button></div>
              <div class="fps"><b>3.4fps</b><i>Indie Edition</i><span>297.31ms</span></div>
            </div>
            <div class="strip r"><button v-for="(t, i) in rightStrip" :key="i" :class="{ on: t.on }" :style="{ marginTop: t.gap + 'px' }" :aria-label="t.n"><span v-if="t.n === 'abc'">abc</span><template v-else><Ico :n="t.n" /><em v-if="t.n === 'ptNum' || i === 16">12</em></template></button></div>
          </div>
          <div class="viewfoot">
            <span class="sel w62"><select aria-label="Tool group"><option>View</option></select><i></i></span>
            <Ico n="eyeBare" class="eyeb" /><Ico n="backDim" class="bk" />
            <span class="slots"><button v-for="n in 9" :key="n" :class="{ on: n === 5 }">{{ n }}</button></span><i class="dn dim"></i>
          </div>
        </section>
        <div class="hsplit"></div>
        <section class="motion">
          <TabBar :items="[['Geometry Spreadsheet', 102], ['Motion FX View', 78], ['Animation Editor', 78]]" :active="1" />
          <PathBar :chop="true" />
          <div class="gbar">
            <button v-for="(n, i) in ['cA', 'cB', 'cC', 'cD', 'home']" :key="n" class="ib" :class="{ on: i === 0 }" :aria-label="n"><Ico :n="n" /></button>
            <span class="mb a">Options<i></i></span><span class="mb b">Graphs<i></i></span><span class="mb c">Adapt<i></i></span>
            <span class="sp"></span>
            <span class="sel w59"><select aria-label="Notes"><option>Notes Off</option></select><i></i></span>
            <input class="note" aria-label="Filter" /><Ico n="ring" /><Ico n="wave" />
          </div>
          <div class="scope">
            <svg viewBox="5 879 1137 431" preserveAspectRatio="xMinYMin slice" aria-label="Channel graph">
              <g transform="translate(0 860) scale(.3827 .3482)">
                <path d="M367 55V1252M721 55V1252M1076 55V1252M1430 55V1252M1783 55V1252M2137 55V1252M2492 55V1252M2845 55V1252M120 145H2985M120 354H2985M15 655H2985M15 1252H2985" stroke="#202020" stroke-width="3" />
                <rect v-for="(f, i) in fills" :key="i" :x="f[0]" y="145" :width="f[1] - f[0]" height="420" :fill="f[2]" />
                <rect v-for="(t, i) in under" :key="'u' + i" :x="t[0]" :y="t[3]" :width="t[1]" :height="t[4] - t[3]" :fill="t[2]" />
                <polygon v-for="o in overlay" :key="o" :points="o" fill="#1c1024" fill-opacity=".62" />
                <rect v-for="(t, i) in thin" :key="'t' + i" :x="t[0]" :y="t[3]" :width="t[1]" :height="t[4] - t[3]" :fill="t[2]" fill-opacity=".85" />
                <rect v-for="(t, i) in lower" :key="'l' + i" :x="t[0]" :y="t[3]" :width="t[1]" :height="t[4] - t[3]" :fill="t[2]" />
                <rect v-for="(t, i) in notches" :key="'n' + i" :x="t[0]" :y="t[2]" :width="t[1]" :height="t[3] - t[2]" fill="#173a72" />
                <rect v-for="t in cuts" :key="'c' + t[0]" :x="t[0]" y="1090" :width="t[1]" height="91" fill="#001030" />
                <rect v-for="t in purpleTeeth" :key="'p' + t" :x="t" y="725" width="2" height="38" fill="#5a1078" />
                <path d="M120 565H2985" stroke="#6a12a8" stroke-width="3" /><path d="M120 816H2985" stroke="#420a58" stroke-width="3" />
                <path d="M120 908H2985" stroke="#200a60" stroke-width="3" /><path d="M120 998H2985" stroke="#120c50" stroke-width="3" />
                <path d="M120 1089H2985" stroke="#10205c" stroke-width="3" /><path d="M120 1181H2985" stroke="#1a4a80" stroke-width="3" />
                <path d="M2406 55V1252" stroke="#dcdcdc" stroke-width="4" />
              </g>
              <g class="mono8"><text v-for="t in scopeText" :key="t[0]" :x="t[0]" :y="t[1]" :fill="t[3]">{{ t[2] }}</text></g>
              <g class="mono9" fill="#d8d8d8">
                <text v-for="(t, i) in yLabels" :key="'y' + i" x="45" :y="t[0]" text-anchor="end">{{ t[1] }}</text>
                <text v-for="t in xLabels" :key="t[1]" :x="t[0]" y="1306" text-anchor="middle">{{ t[1] }}</text>
                <text x="6" y="1306">Frames</text><text x="1140" y="1290" text-anchor="end">Indie Edition</text>
              </g>
            </svg>
            <i class="vbar"></i>
          </div>
          <div class="chan">
            <button v-for="(c, i) in chanButtons" :key="i" class="cb" :class="{ y: i > 10 }" :style="{ background: c }" aria-label="Segment function"><svg viewBox="0 0 16 16"><path :d="glyphs[i]" fill="none" stroke="#ffffff66" /></svg></button>
            <label class="q"><input type="checkbox" />Quaternion</label><label><input type="checkbox" />Column Select</label>
            <i class="bar"></i><span class="sp"></span>
            <label class="cs">Channel Scope <span class="sel w37"><select><option>*</option></select><i></i></span></label>
            <button v-for="n in ['plusW', 'xW', 'eqW', 'refresh', 'star']" :key="n" class="ob" :aria-label="n"><Ico :n="n" /></button>
          </div>
        </section>
      </div>

      <div class="right">
        <div class="params">
          <section class="pane p1">
            <TabBar :items="[['pscale_from_tail', 81], ['Take List', 58], ['Performance Monitor', 97]]" :active="0" :italic="true" />
            <PathBar :live="true" num="1" />
            <div class="ophead"><Ico n="wrangle" /><label for="opname">Attribute Wrangle</label><input id="opname" class="f" value="pscale_from_tail" /><Ico v-for="n in headIcons" :key="n" :n="n" /></div>
            <div class="ptabs"><button class="on">Code</button><button>Bindings</button></div>
            <div class="form">
              <div class="row r20"><label for="grp">Group</label><input id="grp" class="f" /><i class="drop"></i><Ico n="cursor" /></div>
              <div class="row r20"><label for="gt">Group Type</label><span class="sel w95"><select id="gt"><option>Guess from Group</option></select><i></i></span></div>
              <div class="row r20"><label for="ro">Run Over</label><span class="sel w93"><select id="ro"><option>Points</option></select><i></i></span></div>
              <p class="vx">VEXpression</p>
              <div class="coderow">
                <pre contenteditable="true">@pscale = <i>chramp</i>(<em>'pre_empt_ramp'</em>, @tail) * <i>ch</i>(<em>'pscale_scale'</em>) ;
<b>//@pscale *= @env ;</b></pre>
                <span class="cside"></span>
                <span class="ctools"><i class="drop"></i><Ico n="addParm" /></span>
              </div>
              <div class="lncol"><span></span><span>Ln 1, Col 1</span></div>
              <div class="row r18"><label for="atc">Attributes to Create</label><input id="atc" class="f h13" value="*" /></div>
              <label class="chk"><input type="checkbox" />Enforce Prototypes</label>
            </div>
            <div class="ramphead"><span>Pre Empt Ramp</span><span class="sp"></span><Ico n="symA" /><Ico n="symB" /><Ico n="gear" /></div>
            <div class="rampbox">
              <div class="ramprow">
                <div class="rbtns"><div><button aria-label="Remove point">×</button><button aria-label="Add point">+</button></div><div class="ri"><Ico n="tri" /><Ico n="book" /></div></div>
                <svg class="ramp" viewBox="0 0 594 54" preserveAspectRatio="none" aria-label="Ramp">
                  <path d="M4 41V2H588" fill="none" stroke="#888" /><path d="M5 3H588V40H5z" fill="#262626" />
                  <path d="M4 41C180 40 300 34 440 27 530 21 565 16 588 2V41z" fill="#a8a8a8" />
                  <circle cx="4" cy="40" r="3" /><circle cx="588" cy="3" r="3" /><circle cx="540" cy="32" r="3" fill="#c08a20" stroke="#222" />
                  <path d="M-1 53v-9l5-4 5 4v9zM583 53v-10l5-5 5 5v10z" fill="#484848" stroke="#2a2a2a" /><path d="M534 53V43l6-5 6 5v10z" fill="#444" stroke="#0a0a0a" />
                </svg>
              </div>
              <div class="row r17"><label for="pn">Point No.</label><input id="pn" class="f w43" value="2" /><input type="range" min="0" max="100" value="50" aria-label="Point No. slider" :style="{ '--p': '50%' }" /></div>
              <div class="row r18"><label for="po">Position</label><input id="po" class="f w84 bd" value="0.917582" /><input type="range" min="0" max="1000" value="917" aria-label="Position slider" :style="{ '--p': '92%' }" /></div>
              <div class="row r19"><label for="va">Value</label><input id="va" class="f w84 bd" value="0.22449" /><input type="range" min="0" max="1000" value="224" aria-label="Value slider" :style="{ '--p': '22%' }" /></div>
              <div class="row r20"><label for="ip">Interpolation</label><span class="sel w88"><select id="ip"><option>B-Spline</option></select><i></i></span></div>
            </div>
            <div class="row r22 ps"><label for="sc">Pscale Scale</label><input id="sc" class="f w84 bd" value="3" /><input type="range" min="0" max="100" value="100" aria-label="Pscale Scale slider" :style="{ '--p': '100%' }" /></div>
          </section>
          <section class="pane p2">
            <TabBar :items="[['express15', 60]]" :active="0" :italic="true" />
            <PathBar :chop="true" num="2" />
            <div class="ophead"><Ico n="expr" /><label for="opname2">Expression</label><input id="opname2" class="f" value="express15" /><Ico v-for="n in headIcons" :key="n" :n="n" /></div>
            <div class="ptabs"><button>Group</button><button class="on">Expr</button><button>Common</button></div>
            <div class="form">
              <div class="row r19"><label for="cpe">Channels Per Expr</label><input id="cpe" class="f w89" value="1" /><input type="range" value="0" aria-label="Channels Per Expr slider" :style="{ '--p': '0%' }" /></div>
              <div class="row r19"><label for="nex">Num Expressions</label><input id="nex" class="f w89" value="1" /><input type="range" value="0" aria-label="Num Expressions slider" :style="{ '--p': '0%' }" /></div>
            </div>
            <div class="ops">
              <table><thead><tr><th></th><th>Input Operators (Drag/Drop to reorder)</th><th></th></tr></thead>
                <tbody><tr><td><Ico n="up" /></td><td>Cymbals_Tail</td><td><Ico n="del" /></td></tr></tbody></table>
            </div>
          </section>
        </div>
        <div class="hsplit"></div>
        <div class="nets">
          <section class="net n1">
            <TabBar :items="[['/obj/15_by_16_v4_3', 94], ['Tree View', 62], ['Material Palette', 79], ['Asset Browser', 75]]" :active="0" :italic="true" />
            <PathBar :live="true" num="1" />
            <nav class="menu"><button v-for="m in netMenus" :key="m">{{ m }}</button><span class="sp"></span><Ico v-for="n in netIcons" :key="n[0]" :n="n[0]" :class="{ g: n[1] }" /></nav>
            <div class="canvas">
              <svg>
                <defs>
                  <linearGradient id="w1" gradientUnits="userSpaceOnUse" x1="20" y1="20" x2="320" y2="220"><stop offset="0" stop-color="#323232" /><stop offset=".6" stop-color="#333" /><stop offset="1" stop-color="#5b7696" /></linearGradient>
                  <linearGradient id="w2" gradientUnits="userSpaceOnUse" x1="340" y1="220" x2="560" y2="0"><stop offset="0" stop-color="#5b7696" /><stop offset=".5" stop-color="#363636" /><stop offset=".85" stop-color="#363636" /><stop offset="1" stop-color="#4c5a6a" /></linearGradient>
                </defs>
                <path d="M15 17L316 220" stroke="url(#w1)" /><path d="M338 220L529 0M342 220L560 0" stroke="url(#w2)" />
                <path d="M329 8l-4 30" stroke="#56708e" /><path d="M328 44v174" stroke="#4c6480" />
                <circle cx="329" cy="232" r="20" fill="#43699b" /><circle cx="329" cy="232" r="14" fill="#9272cc" />
                <g fill="#c9c9c9"><rect x="322" y="2" width="14" height="6" rx="2" /><rect x="321" y="38" width="15" height="6" rx="1" /><rect x="322" y="229" width="14" height="6" rx="2" /></g>
                <g fill="#666"><rect x="327" y="4" width="3" height="3" /><rect x="327" y="40" width="3" height="3" /><rect x="327" y="231" width="3" height="3" /></g>
                <g font-size="4"><text x="338" y="6" fill="#a0a040">merge5</text><text x="338" y="10" fill="#a0a040">43.0f</text><text x="338" y="38" fill="#555">Attribute Wrangle</text><text x="338" y="42" fill="#888">velocity_by_P2</text><text x="338" y="46" fill="#888">v, N</text><text x="338" y="233" fill="#ccc">add_tail</text></g>
              </svg>
              <span class="wm n1w">Indie Edition</span><b class="ctx">Geometry</b>
              <div class="swatches"><button v-for="c in colors" :key="c" :style="{ background: c }" :aria-label="c"></button></div>
            </div>
          </section>
          <section class="net n2">
            <TabBar :items="[['/obj/chopnet_m', 84]]" :active="0" :italic="true" />
            <PathBar :chop="true" num="2" />
            <nav class="menu"><button v-for="m in netMenus" :key="m">{{ m }}</button><span class="sp"></span><Ico v-for="n in netIcons" :key="n[0]" :n="n[0]" :class="{ g: n[1] }" /></nav>
            <div class="canvas">
              <svg>
                <g fill="none" stroke="#4a6282"><polyline v-for="w in wires2" :key="w" :points="w" /></g>
                <g fill="none" stroke="#43699b" stroke-width="6"><circle :cx="gx(1317)" :cy="gy(1022)" r="17" /><circle :cx="gx(1132)" :cy="gy(1202)" r="17" /></g>
                <circle v-for="k in knots" :key="k[0]" :cx="k[0]" :cy="k[1]" r="2" fill="#c4c4c4" />
                <g v-for="(n, i) in nodes" :key="i">
                  <rect v-if="n.k === 'm' || n.k === 'd'" :x="n.x - 8" :y="n.y - 5" width="16" height="2" :fill="n.k === 'd' ? '#666' : '#b0b0b0'" />
                  <rect v-else :x="n.x - 4" :y="n.y - 5" width="1" height="1" fill="#ccc" /><rect :x="n.x - 10" :y="n.y - 3" width="20" height="7" rx="1" :fill="nodeFill[n.k]" />
                  <path v-if="n.k === 'd'" :d="`M${n.x - 9} ${n.y - 2}h18v5h-18z`" fill="#222" stroke="#666" />
                  <rect v-if="n.k === 'd'" :x="n.x - 10" :y="n.y - 3" width="3" height="7" fill="#e8dc40" />
                  <path :d="`M${n.x - 7} ${n.y - 3}v7M${n.x + 7} ${n.y - 3}v7`" stroke="#00000033" />
                  <circle v-if="n.k === 'o'" :cx="n.x" :cy="n.y" r="2" fill="none" stroke="#f0c878" />
                  <rect v-else :x="n.x - 2" :y="n.y - 2" width="4" height="4" :fill="n.k === 'b' ? '#c06078' : '#77777788'" />
                  <rect :x="n.x - 1" :y="n.y + 4" width="2" height="2" fill="#aaa" />
                  <text v-if="n.sub" :x="n.x + 12" :y="n.y - 2" fill="#5c5c5c" font-size="4">{{ n.sub }}</text>
                  <text :x="n.x + 12" :y="n.y + 2" :fill="n.k === 'd' ? '#5a5a5a' : '#b0b0b0'" font-size="4">{{ n.label }}</text>
                </g>
                <text x="1" y="286" fill="#b0b0b0" font-size="4">k_Snare_Range_Del_ST</text>
                <path :d="`M${gx(1280)} ${gy(1148)}l4 2-4 2z`" fill="#5b7696" />
              </svg>
              <span class="wm n2w">Indie Edition</span><b class="ctx">Motion FX</b>
              <div class="swatches"><button v-for="c in colors" :key="c" :style="{ background: c }" :aria-label="c"></button></div>
            </div>
          </section>
        </div>
      </div>
    </main>

    <footer class="play">
      <div class="transport">
        <div class="trow">
          <button v-for="n in ['first', 'prev', 'stopSq', 'play', 'last']" :key="n" :class="{ on: n === 'stopSq' }" :aria-label="n"><Ico :n="n" /></button>
          <input class="f fr" value="38797" aria-label="Frame" />
          <button class="sm" aria-label="Step back"><Ico n="stepB" /></button><button class="sm" aria-label="Step forward"><Ico n="stepF" /></button>
        </div>
        <div class="trow">
          <button v-for="n in ['winPtr', 'speaker', 'loop', 'clock']" :key="n" :class="{ on: n === 'clock' }" :aria-label="n"><Ico :n="n" /></button>
          <button class="md" aria-label="Previous key"><Ico n="kPrev" /></button><button class="md" aria-label="Next key"><Ico n="kNext" /></button>
        </div>
      </div>
      <div class="ruler">
        <svg>
          <path d="M4 18H2132" stroke="#555" />
          <path :d="minor.map((x) => `M${x} 14v8`).join('')" stroke="#505050" />
          <path :d="noise.map((n) => `M${n[0]} ${18 - n[1]}v${n[1] * 2}`).join('')" stroke="#5e5e5e" stroke-opacity=".7" />
          <path :d="marks.slice(1).map((m) => `M${m.x} 12v12`).join('')" stroke="#8c8c8c" />
          <text v-for="m in marks" :key="m.n" :x="m.x" y="8" fill="#9a9a9a" font-size="8">{{ m.n }}</text>
          <rect x="1709" y="3" width="29" height="10" fill="#000" stroke="#bbb" /><path d="M1719 14h10l-5 5z" />
          <text x="1711" y="12" class="mono9" fill="#eee">38797</text>
        </svg>
        <div class="range"><input class="f" value="1" aria-label="Global start" /><input class="f" value="1" aria-label="Range start" /><span class="track"></span><input class="f" value="48000" aria-label="Range end" /><input class="f" value="48000" aria-label="Global end" /></div>
      </div>
      <div class="keys">
        <button class="keyb" aria-label="Set key"><Ico n="key" /></button><i class="drop"></i>
        <div class="kc"><Ico n="chanA" /><button>0 keys, 0/0 channels<i></i></button><Ico n="chanB" /><span class="sel"><select aria-label="Keying"><option>Key All Channels</option></select><i></i></span></div>
      </div>
    </footer>
    <div class="status">
      <span>Successfully saved Modul 45 Build 5.hiplc (Mon Apr 26 16:55:56 2021)</span><span class="sp"></span>
      <div class="cook"><Ico n="brain" /><span class="sel w92"><select aria-label="Cook path"><option>/obj/INT_1/popnet</option></select><i></i></span><Ico n="refreshDim" /><span class="sel w78"><select aria-label="Update mode"><option>Auto Update</option></select><i></i></span></div>
    </div>
  </div>
</template>

<style>
html, body { background: #3a3a3a; }
</style>

<style scoped>
.app { --ui: "Noto Sans CJK SC", "Noto Sans", sans-serif; --mono: "DejaVu Sans Mono", monospace; min-height: 100vh; display: flex; flex-direction: column; background: #3a3a3a; color: #c4c4c4; font: 9px/12px var(--ui); }
.app :deep(*) { box-sizing: border-box; }
.app :deep(button), .app :deep(input), .app :deep(select) { font: inherit; color: inherit; background: none; border: 0; padding: 0; margin: 0; border-radius: 0; }
.app :deep(button) { white-space: nowrap; }
.app :deep(a) { color: inherit; text-decoration: none; }
.app :deep(.ico) { width: 16px; height: 16px; flex: none; display: block; }
.app :deep(.sp) { flex: 1; }
.app :deep(i) { font-style: normal; }
svg text { font-family: var(--ui); }
svg .mono8 text { font: 8px var(--mono); }
svg .mono9 text, svg text.mono9 { font: 9px var(--mono); }

.mac { height: 17px; display: flex; align-items: center; background: #ccb0ce; color: #111; font: 11px/16px Inter, sans-serif; padding: 0 13px 0 14px; border-bottom: 1px solid #6c5a6e; }
.mac .ico { width: 13px; height: 13px; margin-right: 15px; }
.mac b { font-weight: 600; margin-right: 13px; }
.mac button { margin-right: 14px; }
.mac .ico.mi { margin: 0 5px; }
.mac time { margin: 0 7px 0 5px; }
.title { height: 18px; background: linear-gradient(#dcdcdc, #cdcdcd); display: flex; align-items: center; position: relative; }
.lights { display: flex; gap: 6px; padding-left: 6px; position: absolute; }
.lights i { width: 10px; height: 10px; border-radius: 5px; }
.lights .r { background: #f75b55; } .lights .y { background: #f8b830; } .lights .g { background: #2ac23e; }
h1 { flex: 1; margin: 0; text-align: center; font: 10px/18px Inter, sans-serif; color: #3a3a3a; }

.cols { display: grid; grid-template-columns: minmax(0, 1154fr) minmax(0, 1340fr); column-gap: 6px; }
.work { flex: 1; background: #4a4a4a; }
.shelf { height: 45px; border-bottom: 1px solid #1c1c1c; min-width: 0; }
.shelftabs { height: 14px; display: flex; background: #272727; font-size: 7px; line-height: 14px; }
.first .shelftabs { padding-left: 8px; }
.shelftabs button { flex: none; border-right: 1px solid #111; color: #b0b0b0; }
.shelftabs button.on { background: linear-gradient(#4a4a4a, #404040); }
.app .shelftabs .plus, .app :deep(.tabs .plus) { width: 18px; border: 0; font: 700 14px/14px "Liberation Sans", sans-serif; color: #eee; }
.app :deep(.dn) { width: 0; height: 0; border: 3px solid transparent; border-top: 4px solid #e8e8e8; border-bottom: 0; margin: auto 5px; flex: none; }
.tools { height: 30px; display: flex; background: linear-gradient(#424242, #363636); font-size: 7px; line-height: 7px; }
.first .tools { padding-left: 7px; }
.tools button { flex: none; display: flex; flex-direction: column; align-items: center; padding-top: 1px; }
.tools .ico { width: 17px; height: 17px; margin-bottom: 3px; }
.tools .two .ico { width: 15px; height: 15px; margin-bottom: 0; }
.tools .two span { width: 42px; white-space: normal; }

.left, .right { display: flex; flex-direction: column; min-width: 0; background: #3a3a3a; }
.scene { padding-left: 8px; background: #444; flex: 1; display: flex; flex-direction: column; }
.motion { padding-left: 5px; background: #444; }
.app :deep(.tabs) { height: 15px; display: flex; background: #272727; font-size: 8px; line-height: 15px; }
.motion :deep(.tabs), .net :deep(.tabs) { height: 16px; }
.app :deep(.tab) { flex: none; display: flex; justify-content: space-between; align-items: center; padding: 0 3px 0 4px; border-right: 1px solid #131313; }
.app :deep(.tab.on) { background: linear-gradient(#505050, #424242); }
.app :deep(.tab.it .name) { font-style: italic; }
.app :deep(.tab .name) { color: #b8b8b8; line-height: 15px; }
.app :deep(.tab .x) { font: 700 9px/14px "Liberation Sans", sans-serif; color: #e8e8e8; }
.app :deep(.max) { width: 8px; height: 7px; background: #e8e8e8; margin: auto 2px; }
.app :deep(.tabs .dn) { margin-right: 5px; }
.app :deep(.path) { height: 27px; display: flex; align-items: center; background: #3c3c3c; padding: 0 1px 0 0; border-bottom: 1px solid #2a2a2a; }
.motion :deep(.path) { height: 24px; }
.net :deep(.path) { height: 26px; }
.app :deep(.nav) { width: 17px; height: 16px; display: grid; place-items: center; }
.app :deep(.nav:first-child) { margin-left: 2px; }
.app :deep(.nav:nth-child(2)) { margin-right: 4px; }
.app :deep(.nav .ico) { width: 14px; }
.app :deep(.crumbs) { flex: 1; height: 19px; display: flex; align-items: center; gap: 2px; border: 1px solid #232323; border-top-color: #2c2c2c; background: linear-gradient(#434343, #3a3a3a); color: #d0d0d0; margin-right: 6px; }
.app :deep(.crumbs .chev) { width: 6px; height: 6px; margin: 0 1px 0 0; border: 1px solid #2a2a2a; border-left: 0; border-bottom: 0; rotate: 45deg; }
.app :deep(.crumbs .drop) { width: 6px; border: 0; background: #2e2e2e; height: 17px; }
.app :deep(.path .num) { width: 18px; height: 18px; border: 1px solid #999; border-radius: 9px; text-align: center; line-height: 16px; font-size: 8px; }
.app :deep(.path .tg) { margin-left: 2px; }
.app :deep(.path .ex) { margin-left: 3px; }
.app :deep(.path .ex:nth-last-child(3)) { margin-left: 11px; }
.app :deep(.path .ex:last-child) { margin-right: 2px; }
.app :deep(.drop) { display: block; width: 15px; height: 15px; background: linear-gradient(#444, #363636); border: 1px solid #2a2a2a; position: relative; flex: none; }
.app :deep(.drop)::after, .mb i::after { content: ""; position: absolute; left: 50%; top: 50%; margin: -2px 0 0 -3px; border: 3px solid transparent; border-top: 4px solid #8c8c8c; border-bottom: 0; }

.viewbar { height: 24px; display: flex; align-items: center; background: #2d2d2d; padding: 0 1px 0 8px; }
.viewbar b { color: #e0e0e0; font-weight: 700; }
.picks { display: flex; gap: 9px; margin-left: 463px; align-items: center; }
.picks .hl { background: #6d7880; margin: 0 -6px 0 1px; height: 18px; }
.picks .ico:last-child { margin-left: 2px; }
.stage { flex: 1; display: flex; min-height: 636px; }
.strip { background: #3c3c3c; flex: none; display: flex; flex-direction: column; align-items: center; }
.strip.l { width: 24px; } .strip.r { width: 21px; }
.strip button { width: 20px; height: 18px; display: flex; align-items: center; justify-content: center; position: relative; flex: none; }
.strip button.on { background: #6c7981; outline: 1px solid #59646b; }
.strip button.yel { background: #5c5830; outline: 1px solid #50504a; }
.strip em { position: absolute; right: 1px; top: -1px; font: 700 8px/9px var(--ui); color: #eee; }
.strip span { font-size: 9px; }
.port { flex: 1; min-width: 0; position: relative; background: #000; overflow: hidden; }
.port > svg { position: absolute; width: 100%; height: 100%; }
.pills { position: absolute; right: 4px; top: 5px; display: flex; gap: 3px; }
.pills button { height: 14px; border: 1px solid #666; border-radius: 7px; padding: 0 4px; background: #0a0a0a; line-height: 12px; font-size: 8px; }
.fps { position: absolute; right: 3px; bottom: 1px; display: flex; flex-direction: column; align-items: flex-end; color: #a8a8a8; font-size: 8px; line-height: 8px; }
.fps b { font: 700 16px/16px var(--ui); color: #a8a8a8; }
.fps i { color: #6a6a18; margin-right: 8px; line-height: 8px; }
.viewfoot { height: 26px; display: flex; align-items: center; background: #2d2d2d; padding-left: 408px; border-top: 1px solid #484848; }
.eyeb { margin: 0 74px 0 18px; }
.slots { display: flex; margin-left: 4px; }
.slots button { width: 11px; height: 24px; background: #424242; border-left: 1px solid #858585; color: #8a8a8a; font-size: 8px; padding-right: 1px; }
.slots button.on { color: #eee; font-weight: 700; }
.viewfoot .dn { border-top-color: #999; margin-left: 4px; }
.hsplit { height: 6px; background: #4a4a4a; border-top: 1px solid #333; }

.app :deep(.sel) { display: inline-flex; height: 17px; position: relative; background: linear-gradient(#505050, #444); border: 1px solid #2e2e2e; flex: none; }
.app :deep(.sel select) { appearance: none; flex: 1; width: 100%; padding: 0 0 0 9px; line-height: 14px; outline: 0; }
.app :deep(.sel i) { position: absolute; right: 0; top: 0; width: 8px; height: 100%; background: #393939; }
.app :deep(.sel i)::before, .app :deep(.sel i)::after { content: ""; position: absolute; left: 2px; border: 2px solid transparent; }
.app :deep(.sel i)::before { top: 3px; border-bottom: 3px solid #999; border-top: 0; }
.app :deep(.sel i)::after { bottom: 3px; border-top: 3px solid #999; border-bottom: 0; }
.w62 { width: 63px; } .w59 { width: 59px; } .w37 { width: 39px; } .w95 { width: 96px; } .w93 { width: 94px; } .w88 { width: 89px; } .w92 { width: 97px; } .w78 { width: 78px; }

.gbar { height: 25px; display: flex; align-items: center; background: #3a3a3a; padding: 0 2px 0 10px; }
.ib { width: 16px; height: 17px; background: #2c2c2c; border-right: 1px solid #444; display: grid; place-items: center; }
.app .ib .ico { width: 14px; }
.app .ib.on { background: #61707a; }
.mb { height: 18px; background: linear-gradient(#4c4c4c, #424242); position: relative; padding: 2px 0 0 9px; border: 1px solid #303030; }
.mb i { position: absolute; right: 0; top: 0; width: 8px; height: 100%; background: #333; }
.mb.a { width: 79px; } .mb.b { width: 76px; } .mb.c { width: 70px; }
.app .note { width: 395px; height: 15px; background: #131313; margin: 0 6px 0 4px; }
.gbar > .ico { width: 14px; height: 16px; margin-left: 5px; }
.scope { height: 431px; display: flex; background: #000; }
.scope svg { flex: 1; min-width: 0; height: 431px; }
.vbar { width: 12px; background: linear-gradient(90deg, #2e2e2e, #3a3a3a); }
.chan { height: 21px; display: flex; align-items: center; padding: 0 2px 0 10px; background: #3c3c3c; border-bottom: 1px solid #4c4c4c; }
.app .chan .cb { width: 15px; height: 15px; margin-right: 1px; }
.chan .cb svg { display: block; }
.app .chan .cb.y { width: 14px; margin: 0 5px 0 0; }
.chan label { display: flex; align-items: center; color: #c0c0c0; }
.chan .q { margin: 0 6px 0 0; }
.app :deep(input[type="checkbox"]) { appearance: none; width: 10px; height: 10px; background: #131313; margin-right: 6px; }
.chan .bar { width: 1px; height: 20px; background: #aaa; margin-left: 85px; }
.chan .cs { gap: 4px; margin-right: 4px; }
.chan .ob { width: 19px; height: 18px; display: grid; place-items: center; background: #333; }
.chan .ob .ico { width: 13px; }

.params { flex: 1; display: grid; grid-template-columns: minmax(0, 642fr) minmax(0, 692fr); column-gap: 6px; background: #4a4a4a; }
.pane { background: #3a3a3a; display: flex; flex-direction: column; }
.ophead { height: 20px; display: flex; align-items: center; padding: 0 2px 1px 1px; border-bottom: 2px solid #141414; }
.ophead label { font-weight: 700; color: #d8d8d8; margin: 0 2px 0 1px; }
.ophead .f { flex: 1; height: 14px; }
.ophead .ico { margin-left: 3px; }
.ophead .ico:first-child { margin: 0; }
.app :deep(.f) { background: #131313; font: 9px/12px var(--mono); color: #dcdcdc; height: 17px; padding: 0 2px; min-width: 0; outline: 0; }
.ptabs { display: flex; height: 19px; padding-top: 2px; border-bottom: 1px solid #404040; }
.app .ptabs button { padding: 0 5px 0 4px; background: #333; border: 1px solid #242424; border-top-color: #2e2e2e; margin-right: -1px; }
.app .ptabs .on { background: #3e3e3e; font-weight: 700; color: #e0e0e0; }
.form { padding: 3px 4px 0 0; }
.row { display: flex; align-items: center; }
.row > label { width: 101px; text-align: right; margin-right: 8px; flex: none; color: #bcbcbc; }
.r17 { height: 17px; } .r18 { height: 18px; } .r19 { height: 19px; } .r20 { height: 20px; } .r22 { height: 22px; }
.row .f { flex: 1; height: 16px; }
.row .h13, #grp { height: 14px; }
.row .w43 { flex: none; width: 43px; height: 14px; } .row .w84 { flex: none; width: 84px; } .row .w89 { flex: none; width: 89px; }
.row .bd { font-weight: 700; color: #fff; }
.row .drop { margin: 0 3px 0 2px; }
.vx { margin: 4px 0 0 6px; line-height: 12px; }
.coderow { display: flex; margin-left: 4px; height: 94px; margin-top: 1px; }
pre { flex: 1; min-width: 0; margin: 0; background: #131313; color: #f0f0f0; font: 700 9px/12px var(--mono); padding: 1px; outline: 0; }
pre i { color: #6cc6d8; } pre em { color: #58c858; font-style: normal; } pre b { color: #e4e458; }
.cside { width: 10px; background: #343434; }
.ctools { width: 20px; padding: 4px 2px; }
.ctools .drop { margin-bottom: 4px; }
.lncol { display: flex; height: 17px; margin: 11px 19px 1px 4px; border: 1px solid #a8a8a8; }
.lncol span:first-child { flex: 1; border-right: 1px solid #a8a8a8; }
.lncol span:last-child { width: 81px; text-align: center; line-height: 15px; }
.chk { display: flex; align-items: center; margin-left: 109px; height: 16px; }
.ramphead { height: 22px; margin-top: 2px; display: flex; align-items: center; border-top: 1px solid #2a2a2a; padding: 0 5px 0 3px; }
.ramphead .ico { margin-left: 3px; }
.rampbox { border: 1px solid #2e2e2e; margin: 0 4px 0 1px; padding: 1px 0; }
.ramprow { display: flex; height: 57px; }
.rbtns { width: 39px; padding: 2px 0 0 3px; }
.rbtns > div { display: flex; }
.app .rbtns button { width: 15px; height: 15px; font: 700 13px/13px "Liberation Sans", sans-serif; border: 1px solid #2a2a2a; background: #444; color: #fff; }
.rbtns .ri { margin-top: 21px; gap: 4px; padding-left: 1px; }
.ri .ico { width: 12px; height: 12px; }
.ramp { flex: 1; min-width: 0; height: 54px; margin-right: 1px; }
.rampbox .row > label { width: 99px; }
.ps > label { width: 97px; } .ps { padding-right: 1px; }
.app .row input[type="range"] { appearance: none; flex: 1; min-width: 0; height: 16px; margin-left: 2px; outline: 0; background: linear-gradient(90deg, #2c4a78 var(--p), #090909 var(--p)) center / 100% 2px no-repeat; }
input[type="range"]::-webkit-slider-thumb { appearance: none; width: 2px; height: 16px; background: #a8a8a8; }
.p2 .form { padding-right: 6px; }
.app .p2 .row input[type="range"] { margin-left: 0; }
.p2 .row > label { width: 102px; }
.ops { margin-top: 118px; flex: 1; background: #262626; border-right: 13px solid #3a3a3a; border-top: 3px solid #303030; }
.ops table { width: 100%; border-collapse: collapse; line-height: 11px; }
.ops th { height: 12px; background: #2b2b2b; font-weight: 400; text-align: left; padding: 0; }
.ops td { height: 13px; background: #3a3a3a; padding: 0; }
.ops th:first-child, .ops td:first-child { width: 14px; } .ops th:last-child, .ops td:last-child { width: 13px; }
.ops .ico { width: 12px; height: 12px; }

.nets { display: grid; grid-template-columns: minmax(0, 563fr) minmax(0, 772fr); column-gap: 5px; background: #4a4a4a; }
.net { min-width: 0; }
.menu { height: 21px; display: flex; align-items: center; background: linear-gradient(#404040, #353535); padding: 0 1px 0 13px; font-size: 10px; color: #d0d0d0; border-bottom: 1px solid #2a2a2a; }
.app .menu button { margin-right: 10px; }
.menu .ico { margin-left: 3px; }
.menu .ico.g { margin-left: 14px; }
.canvas { height: 428px; position: relative; background: #303030; overflow: hidden; border-bottom: 1px solid #4c4c4c; }
.canvas svg { width: 100%; height: 100%; display: block; }
.wm { position: absolute; top: 10px; font-size: 15px; line-height: 18px; color: #464646; }
.n1w { right: 239px; } .n2w { right: 343px; }
.ctx { position: absolute; top: 12px; right: 8px; font-size: 18px; line-height: 22px; color: #5c5c5c; }
.swatches { position: absolute; right: 1px; bottom: 0; width: 57px; height: 57px; background: #0c0c0c; padding: 1px; gap: 1px; display: grid; grid-template-columns: repeat(6, 1fr); }

.play { height: 55px; display: flex; background: linear-gradient(#333, #2c2c2c); }
.transport { width: 175px; padding: 8px 0 0 6px; border-left: 4px solid #444; display: flex; flex-direction: column; gap: 5px; flex: none; }
.trow { display: flex; height: 21px; }
.app .trow button { width: 21px; background: #353535; border-right: 1px solid #262626; display: grid; place-items: center; }
.app .trow button.on { background: #6b7780; }
.trow .fr { width: 37px; height: 21px; margin: 0 1px; }
.app .trow .sm { width: 11px; } .trow .sm .ico { width: 12px; }
.app .trow .md { width: 18px; background: #303030; }
.trow + .trow { height: 19px; }
.ruler { flex: 1; min-width: 0; display: flex; flex-direction: column; }
.ruler svg { width: 100%; height: 33px; display: block; overflow: visible; }
.range { display: flex; align-items: center; height: 20px; padding-left: 4px; gap: 2px; margin-bottom: 2px; }
.range .f { width: 32px; height: 17px; }
.track { flex: 1; height: 4px; background: #707070; border-block: 1px solid #8c8c8c; position: relative; margin: 0 2px 0 4px; }
.track::before, .track::after { content: ""; position: absolute; top: -4px; border: 5px solid transparent; }
.track::before { left: -4px; border-left-color: #aaa; } .track::after { right: -4px; border-right-color: #aaa; }
.keys { width: 193px; flex: none; display: flex; align-items: center; padding-left: 4px; }
.app .keyb { width: 28px; height: 28px; border-radius: 14px; display: grid; place-items: center; background: #262626; }
.keys > .drop { width: 12px; height: 18px; margin-left: 2px; margin-right: 5px; }
.kc { flex: 1; display: grid; grid-template-columns: 16px 1fr; gap: 3px 4px; align-items: center; padding-right: 2px; }
.app .kc button, .app .kc .sel { height: 18px; background: linear-gradient(#4e4e4e, #444); text-align: left; padding-left: 13px; border: 1px solid #2e2e2e; position: relative; font-size: 9px; }
.app .kc .sel { padding: 0; }
.kc button i { position: absolute; right: 4px; top: 6px; border: 3px solid transparent; border-bottom: 4px solid #888; border-top: 0; }
.status { height: 20px; display: flex; align-items: center; background: #191919; padding-left: 2px; color: #c8c8c8; }
.cook { display: flex; align-items: center; gap: 2px; background: #333; height: 20px; padding: 0 18px 0 3px; }
.app .cook .sel { height: 20px; }
</style>
